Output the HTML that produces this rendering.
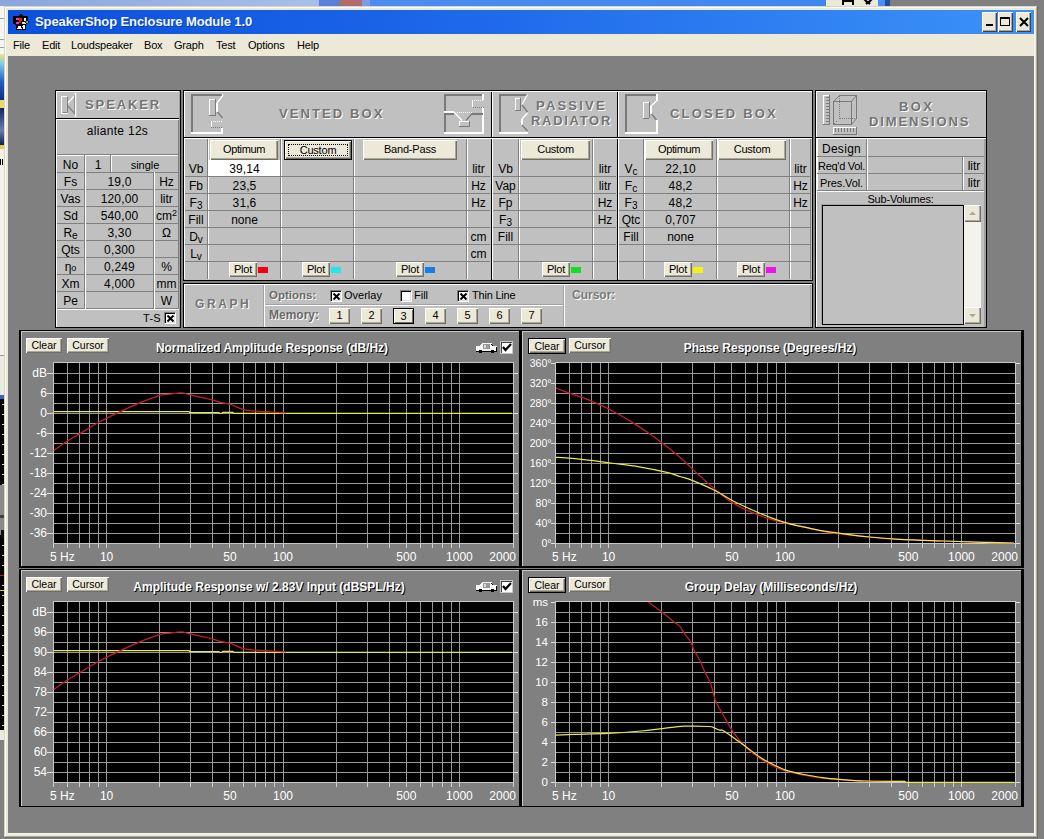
<!DOCTYPE html><html><head><meta charset="utf-8"><style>
*{margin:0;padding:0;box-sizing:border-box}
html,body{width:1044px;height:839px;overflow:hidden;background:#808080;font-family:"Liberation Sans",sans-serif}
body>div,body>svg{position:absolute}
.t{position:absolute;white-space:nowrap}
.btn{position:absolute;background:#ece9d8;text-align:center;color:#000;white-space:nowrap}
.emb{color:#747474;font-weight:bold;text-shadow:1px 1px 0 #fff;white-space:nowrap;position:absolute}
.wt{color:#fff;position:absolute;white-space:nowrap}
</style></head><body>
<div style="left:0;top:0;width:320px;height:6px;background:linear-gradient(90deg,#8aa6dc,#a9bfe8)"></div>
<div style="left:319px;top:0px;width:20px;height:6px;background:#5b7fdc;"></div>
<div style="left:342px;top:0px;width:20px;height:6px;background:#b36b6b;"></div>
<div style="left:362px;top:0px;width:8px;height:6px;background:#7d9be3;"></div>
<div style="left:370px;top:0;width:456px;height:6px;background:linear-gradient(90deg,#4b8cf0,#3d87f2)"></div>
<div style="left:826px;top:0px;width:52px;height:6px;background:#ece9d8;"></div>
<div style="left:842px;top:0px;width:12px;height:5px;background:#000;"></div>
<div style="left:844px;top:2px;width:8px;height:3px;background:#ece9d8;"></div>
<svg style="left:862px;top:0" width="12" height="6" viewBox="0 0 12 6"><path d="M2 -1 L6 3 L10 -1 M4 4 L6 2 L8 4" stroke="#000" stroke-width="2" fill="none"/></svg>
<div style="left:878px;top:0px;width:7px;height:6px;background:#4d8ff0;"></div>
<div style="left:885px;top:0px;width:5px;height:6px;background:#1e4fa8;"></div>
<div style="left:0px;top:6px;width:4px;height:48px;background:#f4f4f0;"></div>
<div style="left:0;top:54px;width:4px;height:46px;background:linear-gradient(#f4e66a,#7fd0f0 20%,#1f5fc8 60%,#0a2e8a)"></div>
<div style="left:0px;top:100px;width:4px;height:8px;background:#f0d860;"></div>
<div style="left:0;top:108px;width:4px;height:37px;background:linear-gradient(#0b2466,#6a7fb0 60%,#0c1f50)"></div>
<div style="left:0px;top:145px;width:4px;height:4px;background:#e8cc50;"></div>
<div style="left:0px;top:149px;width:4px;height:246px;background:#f2f1ea;"></div>
<div style="left:0px;top:355px;width:4px;height:1px;background:#a0a0a0;"></div>
<div style="left:0px;top:356px;width:4px;height:39px;background:#ecebe2;"></div>
<div style="left:0px;top:395px;width:4px;height:4px;background:#3a5fd0;"></div>
<div style="left:0px;top:399px;width:4px;height:86px;background:#050505;"></div>
<div style="left:0px;top:485px;width:4px;height:50px;background:#8a8a8a;"></div>
<div style="left:0px;top:535px;width:4px;height:195px;background:#050505;"></div>
<div style="left:0px;top:730px;width:4px;height:10px;background:#ecebe2;"></div>
<div style="left:2px;top:404px;width:2px;height:1px;background:#d0d0d0;"></div>
<div style="left:2px;top:414px;width:2px;height:1px;background:#d0d0d0;"></div>
<div style="left:2px;top:424px;width:2px;height:1px;background:#d0d0d0;"></div>
<div style="left:2px;top:434px;width:2px;height:1px;background:#d0d0d0;"></div>
<div style="left:2px;top:444px;width:2px;height:1px;background:#d0d0d0;"></div>
<div style="left:2px;top:454px;width:2px;height:1px;background:#d0d0d0;"></div>
<div style="left:2px;top:464px;width:2px;height:1px;background:#d0d0d0;"></div>
<div style="left:2px;top:474px;width:2px;height:1px;background:#d0d0d0;"></div>
<div style="left:2px;top:484px;width:2px;height:1px;background:#d0d0d0;"></div>
<div style="left:2px;top:545px;width:2px;height:1px;background:#d0d0d0;"></div>
<div style="left:2px;top:555px;width:2px;height:1px;background:#d0d0d0;"></div>
<div style="left:2px;top:565px;width:2px;height:1px;background:#d0d0d0;"></div>
<div style="left:2px;top:575px;width:2px;height:1px;background:#d0d0d0;"></div>
<div style="left:2px;top:585px;width:2px;height:1px;background:#d0d0d0;"></div>
<div style="left:2px;top:595px;width:2px;height:1px;background:#d0d0d0;"></div>
<div style="left:2px;top:605px;width:2px;height:1px;background:#d0d0d0;"></div>
<div style="left:2px;top:615px;width:2px;height:1px;background:#d0d0d0;"></div>
<div style="left:2px;top:625px;width:2px;height:1px;background:#d0d0d0;"></div>
<div style="left:2px;top:635px;width:2px;height:1px;background:#d0d0d0;"></div>
<div style="left:2px;top:645px;width:2px;height:1px;background:#d0d0d0;"></div>
<div style="left:2px;top:655px;width:2px;height:1px;background:#d0d0d0;"></div>
<div style="left:2px;top:665px;width:2px;height:1px;background:#d0d0d0;"></div>
<div style="left:2px;top:675px;width:2px;height:1px;background:#d0d0d0;"></div>
<div style="left:2px;top:685px;width:2px;height:1px;background:#d0d0d0;"></div>
<div style="left:2px;top:695px;width:2px;height:1px;background:#d0d0d0;"></div>
<div style="left:2px;top:705px;width:2px;height:1px;background:#d0d0d0;"></div>
<div style="left:2px;top:715px;width:2px;height:1px;background:#d0d0d0;"></div>
<div style="left:2px;top:725px;width:2px;height:1px;background:#d0d0d0;"></div>
<div style="left:0px;top:158px;width:4px;height:7px;background:#f2f1ea;"></div>
<div style="left:0px;top:159px;width:1px;height:6px;background:#000;"></div>
<div style="left:2px;top:159px;width:1px;height:6px;background:#000;"></div>
<div style="left:0px;top:18px;width:4px;height:1px;background:#a0a0a0;"></div>
<div style="left:0px;top:39px;width:4px;height:1px;background:#a0a0a0;"></div>
<div style="left:0px;top:47px;width:4px;height:1px;background:#a0a0a0;"></div>
<div style="left:0px;top:515px;width:4px;height:3px;background:#404040;"></div>
<div style="left:1px;top:530px;width:3px;height:8px;background:#101010;"></div>
<div style="left:0px;top:575px;width:4px;height:1px;background:#b02020;"></div>
<div style="left:0px;top:590px;width:4px;height:1px;background:#d0d040;"></div>
<div style="left:4px;top:6px;width:1034px;height:832px;background:#ece9d8;"></div>
<div style="left:4px;top:6px;width:1034px;height:1px;background:#d8d4c4;"></div>
<div style="left:4px;top:6px;width:1px;height:832px;background:#d8d4c4;"></div>
<div style="left:5px;top:7px;width:1032px;height:1px;background:#fdfcf6;"></div>
<div style="left:5px;top:7px;width:1px;height:830px;background:#fdfcf6;"></div>
<div style="left:1034px;top:10px;width:1px;height:824px;background:#f6f4ec;"></div>
<div style="left:8px;top:833px;width:1027px;height:1px;background:#f6f4ec;"></div>
<div style="left:1037px;top:6px;width:1px;height:832px;background:#716f64;"></div>
<div style="left:4px;top:837px;width:1034px;height:1px;background:#716f64;"></div>
<div style="left:1036px;top:7px;width:1px;height:830px;background:#aca899;"></div>
<div style="left:5px;top:836px;width:1032px;height:1px;background:#aca899;"></div>
<div style="left:8px;top:10px;width:1026px;height:24px;background:linear-gradient(90deg,#0b50dc 0%,#1e68ea 45%,#3d92f8 100%)"></div>
<svg style="left:10px;top:12px" width="22" height="20" viewBox="0 0 22 20" shape-rendering="crispEdges">
<path d="M3 4 L8 4 L10 2 L12 2 L13 4 L18 4 L18 9 L19 10 L18 11 L16 12 L16 18 L6 18 L6 13 L3 12 Z" fill="#000"/>
<rect x="6" y="6" width="3" height="2" fill="#e040e0"/><rect x="9" y="6" width="3" height="3" fill="#e82010"/>
<rect x="6" y="10" width="3" height="2" fill="#e030f0"/><rect x="9" y="9" width="2" height="2" fill="#b02030"/>
<rect x="14" y="6" width="2" height="3" fill="#fff0d0"/><rect x="12" y="10" width="3" height="2" fill="#f0f060"/>
<rect x="16" y="9" width="2" height="2" fill="#40d040"/><rect x="15" y="11" width="1" height="1" fill="#f0f0a0"/>
<rect x="8" y="14" width="3" height="3" fill="#fff"/><rect x="7" y="16" width="1" height="1" fill="#fff"/><rect x="11" y="16" width="1" height="1" fill="#fff"/>
<rect x="13" y="13" width="2" height="4" fill="#fff"/><rect x="12" y="14" width="1" height="1" fill="#fff"/>
</svg>
<div class="t" style="left:35px;top:13px;font-size:13px;line-height:18px;color:#fff;font-weight:bold;text-align:left;letter-spacing:-0.1px;color:#f4faff;text-shadow:1px 1px 0 rgba(10,30,110,0.5)">SpeakerShop Enclosure Module 1.0</div>
<div style="left:982px;top:12px;width:15px;height:20px;background:#ece9d8;box-shadow:inset 1px 1px 0 #fff,inset -1px -1px 0 #404040,inset -2px -2px 0 #aca899"></div>
<div style="left:998px;top:12px;width:15px;height:20px;background:#ece9d8;box-shadow:inset 1px 1px 0 #fff,inset -1px -1px 0 #404040,inset -2px -2px 0 #aca899"></div>
<div style="left:1016px;top:12px;width:15px;height:20px;background:#ece9d8;box-shadow:inset 1px 1px 0 #fff,inset -1px -1px 0 #404040,inset -2px -2px 0 #aca899"></div>
<div style="left:986px;top:24px;width:7px;height:2px;background:#000;"></div>
<div style="left:1000px;top:17px;width:10px;height:9px;border:1px solid #000;border-top-width:2px"></div>
<svg style="left:1019px;top:17px" width="10" height="10" viewBox="0 0 10 10"><path d="M1 1 L9 9 M9 1 L1 9" stroke="#000" stroke-width="2"/></svg>
<div style="left:8px;top:34px;width:1026px;height:22px;background:#ece9d8;"></div>
<div class="t" style="left:13px;top:38px;font-size:11px;line-height:14px;color:#000;font-weight:normal;text-align:left;letter-spacing:-0.2px">File</div>
<div class="t" style="left:42px;top:38px;font-size:11px;line-height:14px;color:#000;font-weight:normal;text-align:left;letter-spacing:-0.2px">Edit</div>
<div class="t" style="left:71px;top:38px;font-size:11px;line-height:14px;color:#000;font-weight:normal;text-align:left;letter-spacing:-0.2px">Loudspeaker</div>
<div class="t" style="left:144px;top:38px;font-size:11px;line-height:14px;color:#000;font-weight:normal;text-align:left;letter-spacing:-0.2px">Box</div>
<div class="t" style="left:174px;top:38px;font-size:11px;line-height:14px;color:#000;font-weight:normal;text-align:left;letter-spacing:-0.2px">Graph</div>
<div class="t" style="left:216px;top:38px;font-size:11px;line-height:14px;color:#000;font-weight:normal;text-align:left;letter-spacing:-0.2px">Test</div>
<div class="t" style="left:248px;top:38px;font-size:11px;line-height:14px;color:#000;font-weight:normal;text-align:left;letter-spacing:-0.2px">Options</div>
<div class="t" style="left:297px;top:38px;font-size:11px;line-height:14px;color:#000;font-weight:normal;text-align:left;letter-spacing:-0.2px">Help</div>
<div style="left:8px;top:56px;width:1026px;height:777px;background:#808080;"></div>
<div style="left:55px;top:90px;width:126px;height:238px;background:#000;"></div>
<div style="left:56px;top:91px;width:124px;height:236px;background:#c0c0c0;"></div>
<div style="left:56px;top:91px;width:124px;height:1px;background:#fff;"></div>
<div style="left:56px;top:91px;width:1px;height:236px;background:#fff;"></div>
<div style="left:56px;top:118px;width:124px;height:1px;background:#000;"></div>
<div style="left:56px;top:119px;width:124px;height:1px;background:#fff;"></div>
<div style="left:178px;top:120px;width:1px;height:35px;background:#808080;"></div>
<div style="left:57px;top:154px;width:122px;height:1px;background:#808080;"></div>
<div class="t" style="left:57px;top:123px;width:121px;height:16px;font-size:12px;line-height:16px;text-align:center;letter-spacing:0.3px;color:#000;">aliante 12s</div>
<div style="left:57px;top:155px;width:122px;height:1px;background:#fff;"></div>
<div style="left:57px;top:172px;width:122px;height:1px;background:#808080;"></div>
<div style="left:57px;top:189px;width:122px;height:1px;background:#808080;"></div>
<div style="left:57px;top:206px;width:122px;height:1px;background:#808080;"></div>
<div style="left:57px;top:223px;width:122px;height:1px;background:#808080;"></div>
<div style="left:57px;top:240px;width:122px;height:1px;background:#808080;"></div>
<div style="left:57px;top:257px;width:122px;height:1px;background:#808080;"></div>
<div style="left:57px;top:274px;width:122px;height:1px;background:#808080;"></div>
<div style="left:57px;top:291px;width:122px;height:1px;background:#808080;"></div>
<div style="left:57px;top:308px;width:122px;height:1px;background:#808080;"></div>
<div style="left:84px;top:155px;width:1px;height:154px;background:#808080;"></div>
<div style="left:85px;top:155px;width:1px;height:154px;background:#fff;"></div>
<div style="left:110px;top:155px;width:1px;height:17px;background:#808080;"></div>
<div style="left:111px;top:155px;width:1px;height:17px;background:#fff;"></div>
<div style="left:153px;top:172px;width:1px;height:137px;background:#808080;"></div>
<div style="left:154px;top:172px;width:1px;height:137px;background:#fff;"></div>
<div style="left:178px;top:155px;width:1px;height:154px;background:#808080;"></div>
<div style="left:57px;top:309px;width:122px;height:1px;background:#fff;"></div>
<div style="left:179px;top:91px;width:1px;height:236px;background:#a0a0a0;"></div>
<div class="t" style="left:57px;top:157px;width:27px;height:17px;font-size:12px;line-height:17px;text-align:center;letter-spacing:0px;color:#000;">No</div>
<div class="t" style="left:86px;top:157px;width:24px;height:17px;font-size:12px;line-height:17px;text-align:center;letter-spacing:0px;color:#000;">1</div>
<div class="t" style="left:112px;top:157px;width:66px;height:17px;font-size:11px;line-height:17px;text-align:center;letter-spacing:0px;color:#000;">single</div>
<div class="t" style="left:57px;top:174px;width:27px;height:17px;font-size:12px;line-height:17px;text-align:center;letter-spacing:0px;color:#000;">Fs</div>
<div class="t" style="left:86px;top:174px;width:67px;height:17px;font-size:12px;line-height:17px;text-align:center;letter-spacing:0.15px;color:#000;">19,0</div>
<div class="t" style="left:155px;top:174px;width:23px;height:17px;font-size:12px;line-height:17px;text-align:center;letter-spacing:0px;color:#000;">Hz</div>
<div class="t" style="left:57px;top:191px;width:27px;height:17px;font-size:12px;line-height:17px;text-align:center;letter-spacing:0px;color:#000;">Vas</div>
<div class="t" style="left:86px;top:191px;width:67px;height:17px;font-size:12px;line-height:17px;text-align:center;letter-spacing:0.15px;color:#000;">120,00</div>
<div class="t" style="left:155px;top:191px;width:23px;height:17px;font-size:12px;line-height:17px;text-align:center;letter-spacing:0px;color:#000;">litr</div>
<div class="t" style="left:57px;top:208px;width:27px;height:17px;font-size:12px;line-height:17px;text-align:center;letter-spacing:0px;color:#000;">Sd</div>
<div class="t" style="left:86px;top:208px;width:67px;height:17px;font-size:12px;line-height:17px;text-align:center;letter-spacing:0.15px;color:#000;">540,00</div>
<div class="t" style="left:155px;top:208px;width:23px;height:17px;font-size:12px;line-height:17px;text-align:center;letter-spacing:0px;color:#000;">cm<span style="font-size:9px;position:relative;top:-4px">2</span></div>
<div class="t" style="left:57px;top:225px;width:27px;height:17px;font-size:12px;line-height:17px;text-align:center;letter-spacing:0px;color:#000;">R<span style="font-size:10px;position:relative;top:2px">e</span></div>
<div class="t" style="left:86px;top:225px;width:67px;height:17px;font-size:12px;line-height:17px;text-align:center;letter-spacing:0.15px;color:#000;">3,30</div>
<div class="t" style="left:155px;top:225px;width:23px;height:17px;font-size:12px;line-height:17px;text-align:center;letter-spacing:0px;color:#000;">&#937;</div>
<div class="t" style="left:57px;top:242px;width:27px;height:17px;font-size:12px;line-height:17px;text-align:center;letter-spacing:0px;color:#000;">Qts</div>
<div class="t" style="left:86px;top:242px;width:67px;height:17px;font-size:12px;line-height:17px;text-align:center;letter-spacing:0.15px;color:#000;">0,300</div>
<div class="t" style="left:155px;top:242px;width:23px;height:17px;font-size:12px;line-height:17px;text-align:center;letter-spacing:0px;color:#000;"></div>
<div class="t" style="left:57px;top:259px;width:27px;height:17px;font-size:12px;line-height:17px;text-align:center;letter-spacing:0px;color:#000;"><span style="font-size:12px">&#951;</span><span style="font-size:9px">o</span></div>
<div class="t" style="left:86px;top:259px;width:67px;height:17px;font-size:12px;line-height:17px;text-align:center;letter-spacing:0.15px;color:#000;">0,249</div>
<div class="t" style="left:155px;top:259px;width:23px;height:17px;font-size:12px;line-height:17px;text-align:center;letter-spacing:0px;color:#000;">%</div>
<div class="t" style="left:57px;top:276px;width:27px;height:17px;font-size:12px;line-height:17px;text-align:center;letter-spacing:0px;color:#000;">Xm</div>
<div class="t" style="left:86px;top:276px;width:67px;height:17px;font-size:12px;line-height:17px;text-align:center;letter-spacing:0.15px;color:#000;">4,000</div>
<div class="t" style="left:155px;top:276px;width:23px;height:17px;font-size:12px;line-height:17px;text-align:center;letter-spacing:0px;color:#000;">mm</div>
<div class="t" style="left:57px;top:293px;width:27px;height:17px;font-size:12px;line-height:17px;text-align:center;letter-spacing:0px;color:#000;">Pe</div>
<div class="t" style="left:86px;top:293px;width:67px;height:17px;font-size:12px;line-height:17px;text-align:center;letter-spacing:0.15px;color:#000;"></div>
<div class="t" style="left:155px;top:293px;width:23px;height:17px;font-size:12px;line-height:17px;text-align:center;letter-spacing:0px;color:#000;">W</div>
<div class="t" style="left:130px;top:311px;width:31px;height:15px;font-size:11px;line-height:15px;text-align:right;letter-spacing:0.3px;color:#000;">T-S</div>
<div style="left:164px;top:312px;width:12px;height:12px;background:#fff;border:1px solid;border-color:#808080 #fff #fff #808080;box-shadow:inset 1px 1px 0 #000,inset -1px -1px 0 #dfdfdf"></div>
<svg style="left:167px;top:315px" width="7" height="7" viewBox="0 0 7 7"><path d="M0.5 0.5 L6.5 6.5 M6.5 0.5 L0.5 6.5" stroke="#000" stroke-width="2"/></svg>
<div class="emb" style="left:85px;top:97px;font-size:13px;line-height:15px;letter-spacing:1.9px">SPEAKER</div>
<svg style="left:58px;top:92px" width="22" height="26" viewBox="0 0 22 26">
<path d="M3.5 4.5 H9.5 V21.5 H3.5 Z" fill="none" stroke="#fff"/>
<path d="M4.5 20.5 H9.5 V4.5" fill="none" stroke="#808080"/>
<path d="M10 11 L17 3" stroke="#fff" stroke-width="1.2"/>
<path d="M10 14 L17 22" stroke="#808080" stroke-width="1.2"/>
<path d="M17.5 1 V25" stroke="#fff" stroke-width="1.5"/>
<path d="M16.5 3 V23" stroke="#909090" stroke-width="1"/>
</svg>
<div style="left:183px;top:90px;width:630px;height:191px;background:#000;"></div>
<div style="left:184px;top:91px;width:628px;height:189px;background:#c0c0c0;"></div>
<div style="left:491px;top:90px;width:1px;height:190px;background:#000;"></div>
<div style="left:617px;top:90px;width:1px;height:190px;background:#000;"></div>
<div style="left:184px;top:137px;width:628px;height:1px;background:#000;"></div>
<div style="left:184px;top:91px;width:628px;height:1px;background:#fff;"></div>
<div style="left:184px;top:91px;width:1px;height:46px;background:#fff;"></div>
<div style="left:184px;top:138px;width:1px;height:141px;background:#fff;"></div>
<div style="left:492px;top:91px;width:1px;height:46px;background:#fff;"></div>
<div style="left:492px;top:138px;width:1px;height:141px;background:#fff;"></div>
<div style="left:618px;top:91px;width:1px;height:46px;background:#fff;"></div>
<div style="left:618px;top:138px;width:1px;height:141px;background:#fff;"></div>
<div style="left:184px;top:138px;width:628px;height:1px;background:#fff;"></div>
<div style="left:207px;top:139px;width:1px;height:140px;background:#808080;"></div>
<div style="left:208px;top:139px;width:1px;height:140px;background:#fff;"></div>
<div style="left:280px;top:139px;width:1px;height:140px;background:#808080;"></div>
<div style="left:281px;top:139px;width:1px;height:140px;background:#fff;"></div>
<div style="left:353px;top:139px;width:1px;height:140px;background:#808080;"></div>
<div style="left:354px;top:139px;width:1px;height:140px;background:#fff;"></div>
<div style="left:466px;top:139px;width:1px;height:140px;background:#808080;"></div>
<div style="left:467px;top:139px;width:1px;height:140px;background:#fff;"></div>
<div style="left:185px;top:176px;width:305px;height:1px;background:#808080;"></div>
<div style="left:185px;top:193px;width:305px;height:1px;background:#808080;"></div>
<div style="left:185px;top:210px;width:305px;height:1px;background:#808080;"></div>
<div style="left:185px;top:227px;width:305px;height:1px;background:#808080;"></div>
<div style="left:185px;top:244px;width:305px;height:1px;background:#808080;"></div>
<div style="left:185px;top:261px;width:305px;height:1px;background:#808080;"></div>
<div style="left:518px;top:139px;width:1px;height:140px;background:#808080;"></div>
<div style="left:519px;top:139px;width:1px;height:140px;background:#fff;"></div>
<div style="left:592px;top:139px;width:1px;height:140px;background:#808080;"></div>
<div style="left:593px;top:139px;width:1px;height:140px;background:#fff;"></div>
<div style="left:493px;top:176px;width:123px;height:1px;background:#808080;"></div>
<div style="left:493px;top:193px;width:123px;height:1px;background:#808080;"></div>
<div style="left:493px;top:210px;width:123px;height:1px;background:#808080;"></div>
<div style="left:493px;top:227px;width:123px;height:1px;background:#808080;"></div>
<div style="left:493px;top:244px;width:123px;height:1px;background:#808080;"></div>
<div style="left:493px;top:261px;width:123px;height:1px;background:#808080;"></div>
<div style="left:643px;top:139px;width:1px;height:140px;background:#808080;"></div>
<div style="left:644px;top:139px;width:1px;height:140px;background:#fff;"></div>
<div style="left:716px;top:139px;width:1px;height:140px;background:#808080;"></div>
<div style="left:717px;top:139px;width:1px;height:140px;background:#fff;"></div>
<div style="left:789px;top:139px;width:1px;height:140px;background:#808080;"></div>
<div style="left:790px;top:139px;width:1px;height:140px;background:#fff;"></div>
<div style="left:619px;top:176px;width:192px;height:1px;background:#808080;"></div>
<div style="left:619px;top:193px;width:192px;height:1px;background:#808080;"></div>
<div style="left:619px;top:210px;width:192px;height:1px;background:#808080;"></div>
<div style="left:619px;top:227px;width:192px;height:1px;background:#808080;"></div>
<div style="left:619px;top:244px;width:192px;height:1px;background:#808080;"></div>
<div style="left:619px;top:261px;width:192px;height:1px;background:#808080;"></div>
<div style="left:810px;top:139px;width:1px;height:140px;background:#808080;"></div>
<div style="left:209px;top:160px;width:71px;height:16px;background:#fff;"></div>
<div class="btn" style="left:210px;top:140px;width:68px;height:20px;box-shadow:inset 1px 1px 0 #fff, inset -1px -1px 0 #716f64, inset -2px -2px 0 #aca899;font-size:11px;line-height:19px;letter-spacing:-0.4px">Optimum</div>
<div class="btn" style="left:284px;top:140px;width:68px;height:20px;border:1px solid #000;box-shadow:inset 1px 1px 0 #fff, inset -1px -1px 0 #716f64, inset -2px -2px 0 #aca899;font-size:11px;line-height:18px;letter-spacing:-0.2px">Custom<div style="position:absolute;left:3px;top:3px;right:3px;bottom:3px;border:1px dotted #000"></div></div>
<div class="btn" style="left:363px;top:140px;width:94px;height:20px;box-shadow:inset 1px 1px 0 #fff, inset -1px -1px 0 #716f64, inset -2px -2px 0 #aca899;font-size:11px;line-height:19px;letter-spacing:-0.2px">Band-Pass</div>
<div class="btn" style="left:521px;top:140px;width:69px;height:20px;box-shadow:inset 1px 1px 0 #fff, inset -1px -1px 0 #716f64, inset -2px -2px 0 #aca899;font-size:11px;line-height:19px;letter-spacing:-0.2px">Custom</div>
<div class="btn" style="left:645px;top:140px;width:68px;height:20px;box-shadow:inset 1px 1px 0 #fff, inset -1px -1px 0 #716f64, inset -2px -2px 0 #aca899;font-size:11px;line-height:19px;letter-spacing:-0.4px">Optimum</div>
<div class="btn" style="left:718px;top:140px;width:68px;height:20px;box-shadow:inset 1px 1px 0 #fff, inset -1px -1px 0 #716f64, inset -2px -2px 0 #aca899;font-size:11px;line-height:19px;letter-spacing:-0.2px">Custom</div>
<div class="t" style="left:185px;top:161px;width:22px;height:17px;font-size:12px;line-height:17px;text-align:center;letter-spacing:0px;color:#000;">Vb</div>
<div class="t" style="left:185px;top:178px;width:22px;height:17px;font-size:12px;line-height:17px;text-align:center;letter-spacing:0px;color:#000;">Fb</div>
<div class="t" style="left:185px;top:195px;width:22px;height:17px;font-size:12px;line-height:17px;text-align:center;letter-spacing:0px;color:#000;">F<span style="font-size:10px;position:relative;top:2px">3</span></div>
<div class="t" style="left:185px;top:212px;width:22px;height:17px;font-size:12px;line-height:17px;text-align:center;letter-spacing:0px;color:#000;">Fill</div>
<div class="t" style="left:185px;top:229px;width:22px;height:17px;font-size:12px;line-height:17px;text-align:center;letter-spacing:0px;color:#000;">D<span style="font-size:10px;position:relative;top:2px">v</span></div>
<div class="t" style="left:185px;top:246px;width:22px;height:17px;font-size:12px;line-height:17px;text-align:center;letter-spacing:0px;color:#000;">L<span style="font-size:10px;position:relative;top:2px">v</span></div>
<div class="t" style="left:209px;top:161px;width:71px;height:17px;font-size:12px;line-height:17px;text-align:center;letter-spacing:0.1px;color:#000;">39,14</div>
<div class="t" style="left:209px;top:178px;width:71px;height:17px;font-size:12px;line-height:17px;text-align:center;letter-spacing:0.1px;color:#000;">23,5</div>
<div class="t" style="left:209px;top:195px;width:71px;height:17px;font-size:12px;line-height:17px;text-align:center;letter-spacing:0.1px;color:#000;">31,6</div>
<div class="t" style="left:209px;top:212px;width:71px;height:17px;font-size:12px;line-height:17px;text-align:center;letter-spacing:0px;color:#000;">none</div>
<div class="t" style="left:468px;top:161px;width:21px;height:17px;font-size:12px;line-height:17px;text-align:center;letter-spacing:0px;color:#000;">litr</div>
<div class="t" style="left:468px;top:178px;width:21px;height:17px;font-size:12px;line-height:17px;text-align:center;letter-spacing:0px;color:#000;">Hz</div>
<div class="t" style="left:468px;top:195px;width:21px;height:17px;font-size:12px;line-height:17px;text-align:center;letter-spacing:0px;color:#000;">Hz</div>
<div class="t" style="left:468px;top:212px;width:21px;height:17px;font-size:12px;line-height:17px;text-align:center;letter-spacing:0px;color:#000;"></div>
<div class="t" style="left:468px;top:229px;width:21px;height:17px;font-size:12px;line-height:17px;text-align:center;letter-spacing:0px;color:#000;">cm</div>
<div class="t" style="left:468px;top:246px;width:21px;height:17px;font-size:12px;line-height:17px;text-align:center;letter-spacing:0px;color:#000;">cm</div>
<div class="t" style="left:493px;top:161px;width:25px;height:17px;font-size:12px;line-height:17px;text-align:center;letter-spacing:0px;color:#000;">Vb</div>
<div class="t" style="left:493px;top:178px;width:25px;height:17px;font-size:12px;line-height:17px;text-align:center;letter-spacing:0px;color:#000;">Vap</div>
<div class="t" style="left:493px;top:195px;width:25px;height:17px;font-size:12px;line-height:17px;text-align:center;letter-spacing:0px;color:#000;">Fp</div>
<div class="t" style="left:493px;top:212px;width:25px;height:17px;font-size:12px;line-height:17px;text-align:center;letter-spacing:0px;color:#000;">F<span style="font-size:10px;position:relative;top:2px">3</span></div>
<div class="t" style="left:493px;top:229px;width:25px;height:17px;font-size:12px;line-height:17px;text-align:center;letter-spacing:0px;color:#000;">Fill</div>
<div class="t" style="left:594px;top:161px;width:22px;height:17px;font-size:12px;line-height:17px;text-align:center;letter-spacing:0px;color:#000;">litr</div>
<div class="t" style="left:594px;top:178px;width:22px;height:17px;font-size:12px;line-height:17px;text-align:center;letter-spacing:0px;color:#000;">litr</div>
<div class="t" style="left:594px;top:195px;width:22px;height:17px;font-size:12px;line-height:17px;text-align:center;letter-spacing:0px;color:#000;">Hz</div>
<div class="t" style="left:594px;top:212px;width:22px;height:17px;font-size:12px;line-height:17px;text-align:center;letter-spacing:0px;color:#000;">Hz</div>
<div class="t" style="left:619px;top:161px;width:24px;height:17px;font-size:12px;line-height:17px;text-align:center;letter-spacing:0px;color:#000;">V<span style="font-size:10px;position:relative;top:2px">c</span></div>
<div class="t" style="left:619px;top:178px;width:24px;height:17px;font-size:12px;line-height:17px;text-align:center;letter-spacing:0px;color:#000;">F<span style="font-size:10px;position:relative;top:2px">c</span></div>
<div class="t" style="left:619px;top:195px;width:24px;height:17px;font-size:12px;line-height:17px;text-align:center;letter-spacing:0px;color:#000;">F<span style="font-size:10px;position:relative;top:2px">3</span></div>
<div class="t" style="left:619px;top:212px;width:24px;height:17px;font-size:12px;line-height:17px;text-align:center;letter-spacing:0px;color:#000;">Qtc</div>
<div class="t" style="left:619px;top:229px;width:24px;height:17px;font-size:12px;line-height:17px;text-align:center;letter-spacing:0px;color:#000;">Fill</div>
<div class="t" style="left:645px;top:161px;width:71px;height:17px;font-size:12px;line-height:17px;text-align:center;letter-spacing:0.1px;color:#000;">22,10</div>
<div class="t" style="left:645px;top:178px;width:71px;height:17px;font-size:12px;line-height:17px;text-align:center;letter-spacing:0.1px;color:#000;">48,2</div>
<div class="t" style="left:645px;top:195px;width:71px;height:17px;font-size:12px;line-height:17px;text-align:center;letter-spacing:0.1px;color:#000;">48,2</div>
<div class="t" style="left:645px;top:212px;width:71px;height:17px;font-size:12px;line-height:17px;text-align:center;letter-spacing:0.1px;color:#000;">0,707</div>
<div class="t" style="left:645px;top:229px;width:71px;height:17px;font-size:12px;line-height:17px;text-align:center;letter-spacing:0px;color:#000;">none</div>
<div class="t" style="left:791px;top:161px;width:19px;height:17px;font-size:12px;line-height:17px;text-align:center;letter-spacing:0px;color:#000;">litr</div>
<div class="t" style="left:791px;top:178px;width:19px;height:17px;font-size:12px;line-height:17px;text-align:center;letter-spacing:0px;color:#000;">Hz</div>
<div class="t" style="left:791px;top:195px;width:19px;height:17px;font-size:12px;line-height:17px;text-align:center;letter-spacing:0px;color:#000;">Hz</div>
<div class="btn" style="left:229px;top:262px;width:28px;height:15px;box-shadow:inset 1px 1px 0 #fff, inset -1px -1px 0 #716f64, inset -2px -2px 0 #aca899;font-size:11px;line-height:14px;letter-spacing:-0.2px">Plot</div>
<div style="left:258px;top:267px;width:10px;height:6px;background:#f00010;"></div>
<div class="btn" style="left:302px;top:262px;width:28px;height:15px;box-shadow:inset 1px 1px 0 #fff, inset -1px -1px 0 #716f64, inset -2px -2px 0 #aca899;font-size:11px;line-height:14px;letter-spacing:-0.2px">Plot</div>
<div style="left:331px;top:267px;width:10px;height:6px;background:#20e8f0;"></div>
<div class="btn" style="left:396px;top:262px;width:28px;height:15px;box-shadow:inset 1px 1px 0 #fff, inset -1px -1px 0 #716f64, inset -2px -2px 0 #aca899;font-size:11px;line-height:14px;letter-spacing:-0.2px">Plot</div>
<div style="left:425px;top:267px;width:10px;height:6px;background:#1080f0;"></div>
<div class="btn" style="left:542px;top:262px;width:28px;height:15px;box-shadow:inset 1px 1px 0 #fff, inset -1px -1px 0 #716f64, inset -2px -2px 0 #aca899;font-size:11px;line-height:14px;letter-spacing:-0.2px">Plot</div>
<div style="left:571px;top:267px;width:10px;height:6px;background:#10e020;"></div>
<div class="btn" style="left:664px;top:262px;width:28px;height:15px;box-shadow:inset 1px 1px 0 #fff, inset -1px -1px 0 #716f64, inset -2px -2px 0 #aca899;font-size:11px;line-height:14px;letter-spacing:-0.2px">Plot</div>
<div style="left:693px;top:267px;width:10px;height:6px;background:#f8f010;"></div>
<div class="btn" style="left:737px;top:262px;width:28px;height:15px;box-shadow:inset 1px 1px 0 #fff, inset -1px -1px 0 #716f64, inset -2px -2px 0 #aca899;font-size:11px;line-height:14px;letter-spacing:-0.2px">Plot</div>
<div style="left:766px;top:267px;width:10px;height:6px;background:#f010f0;"></div>
<div class="emb" style="left:279px;top:106px;font-size:13px;line-height:15px;letter-spacing:2.1px">VENTED BOX</div>
<div class="emb" style="left:536px;top:98px;font-size:13px;line-height:15px;letter-spacing:2.2px">PASSIVE</div>
<div class="emb" style="left:531px;top:113px;font-size:13px;line-height:15px;letter-spacing:1.7px">RADIATOR</div>
<div class="emb" style="left:670px;top:106px;font-size:13px;line-height:15px;letter-spacing:2.2px">CLOSED BOX</div>
<svg style="left:186px;top:90px" width="45" height="48" viewBox="186 90 45 48" shape-rendering="crispEdges"><rect x="191" y="94" width="31" height="2" fill="#7a7a7a"/><rect x="191" y="94" width="2" height="39" fill="#7a7a7a"/><rect x="191" y="132" width="32" height="2" fill="#ffffff"/><path d="M222.5 94 L222.5 96 L217 103" fill="none" stroke="#ffffff" stroke-width="1.3" shape-rendering="auto"/><rect x="216" y="103" width="1.5" height="9" fill="#ffffff"/><path d="M217.5 112 L222.5 118" fill="none" stroke="#7a7a7a" stroke-width="1.3" shape-rendering="auto"/><rect x="209" y="99" width="1" height="16" fill="#ffffff"/><rect x="209" y="99" width="7" height="1" fill="#ffffff"/><rect x="215" y="99" width="1" height="16" fill="#7a7a7a"/><rect x="209" y="115" width="7" height="1" fill="#7a7a7a"/><rect x="211" y="121" width="1" height="1" fill="#ffffff"/><rect x="213" y="121" width="1" height="1" fill="#ffffff"/><rect x="215" y="121" width="1" height="1" fill="#ffffff"/><rect x="217" y="121" width="1" height="1" fill="#ffffff"/><rect x="219" y="121" width="1" height="1" fill="#ffffff"/><rect x="221" y="121" width="1" height="1" fill="#ffffff"/><rect x="211" y="121" width="1" height="7" fill="#ffffff"/><rect x="211" y="127" width="1" height="1" fill="#7a7a7a"/><rect x="213" y="127" width="1" height="1" fill="#7a7a7a"/><rect x="215" y="127" width="1" height="1" fill="#7a7a7a"/><rect x="217" y="127" width="1" height="1" fill="#7a7a7a"/><rect x="219" y="127" width="1" height="1" fill="#7a7a7a"/><rect x="221" y="127" width="1" height="1" fill="#7a7a7a"/><rect x="221" y="128" width="2" height="5" fill="#ffffff"/></svg>
<svg style="left:440px;top:90px" width="51" height="48" viewBox="440 90 51 48" shape-rendering="crispEdges"><rect x="444" y="94" width="40" height="2" fill="#7a7a7a"/><rect x="444" y="94" width="2" height="40" fill="#7a7a7a"/><rect x="444" y="132" width="40" height="2" fill="#ffffff"/><rect x="482" y="94" width="2" height="6" fill="#ffffff"/><rect x="482" y="107" width="2" height="27" fill="#ffffff"/><rect x="444" y="111" width="10" height="1.5" fill="#ffffff"/><rect x="444" y="113" width="10" height="1.5" fill="#7a7a7a"/><path d="M454 112 L462 120.5" fill="none" stroke="#ffffff" stroke-width="1.3" shape-rendering="auto"/><path d="M466 120.5 L472.5 113" fill="none" stroke="#7a7a7a" stroke-width="1.3" shape-rendering="auto"/><rect x="457" y="112" width="1" height="1" fill="#ffffff"/><rect x="459" y="112" width="1" height="1" fill="#ffffff"/><rect x="461" y="112" width="1" height="1" fill="#ffffff"/><rect x="463" y="112" width="1" height="1" fill="#ffffff"/><rect x="465" y="112" width="1" height="1" fill="#ffffff"/><rect x="467" y="112" width="1" height="1" fill="#ffffff"/><rect x="469" y="112" width="1" height="1" fill="#ffffff"/><rect x="471" y="112" width="1" height="1" fill="#ffffff"/><rect x="472" y="113" width="11" height="1.5" fill="#7a7a7a"/><rect x="459" y="121" width="11" height="1" fill="#ffffff"/><rect x="459" y="121" width="1" height="6" fill="#ffffff"/><rect x="469" y="121" width="1" height="6" fill="#7a7a7a"/><rect x="459" y="126" width="11" height="1" fill="#7a7a7a"/><rect x="472" y="100" width="1" height="1" fill="#ffffff"/><rect x="474" y="100" width="1" height="1" fill="#ffffff"/><rect x="476" y="100" width="1" height="1" fill="#ffffff"/><rect x="478" y="100" width="1" height="1" fill="#ffffff"/><rect x="480" y="100" width="1" height="1" fill="#ffffff"/><rect x="482" y="100" width="1" height="1" fill="#ffffff"/><rect x="472" y="100" width="1" height="7" fill="#ffffff"/><rect x="473" y="107" width="1" height="1" fill="#7a7a7a"/><rect x="475" y="107" width="1" height="1" fill="#7a7a7a"/><rect x="477" y="107" width="1" height="1" fill="#7a7a7a"/><rect x="479" y="107" width="1" height="1" fill="#7a7a7a"/><rect x="481" y="107" width="1" height="1" fill="#7a7a7a"/><rect x="483" y="107" width="1" height="1" fill="#7a7a7a"/></svg>
<svg style="left:492px;top:90px" width="48" height="48" viewBox="492 90 48 48" shape-rendering="crispEdges"><rect x="499" y="94" width="28" height="2" fill="#7a7a7a"/><rect x="499" y="94" width="2" height="39" fill="#7a7a7a"/><rect x="499" y="132" width="29" height="2" fill="#ffffff"/><path d="M527.5 94.5 L522 104.5" fill="none" stroke="#ffffff" stroke-width="1.3" shape-rendering="auto"/><path d="M522 105 L527.5 112" fill="none" stroke="#7a7a7a" stroke-width="1.3" shape-rendering="auto"/><path d="M527.5 113 L522 119" fill="none" stroke="#ffffff" stroke-width="1.3" shape-rendering="auto"/><rect x="521" y="119" width="1.5" height="6" fill="#ffffff"/><path d="M522 125 L527.5 131" fill="none" stroke="#7a7a7a" stroke-width="1.3" shape-rendering="auto"/><rect x="515" y="98" width="1" height="12" fill="#ffffff"/><rect x="515" y="98" width="6" height="1" fill="#ffffff"/><rect x="520" y="98" width="1" height="12" fill="#7a7a7a"/><rect x="515" y="110" width="6" height="1" fill="#7a7a7a"/></svg>
<svg style="left:618px;top:90px" width="48" height="48" viewBox="618 90 48 48" shape-rendering="crispEdges"><rect x="625" y="94" width="31" height="2" fill="#7a7a7a"/><rect x="625" y="94" width="2" height="39" fill="#7a7a7a"/><rect x="625" y="132" width="32" height="2" fill="#ffffff"/><rect x="656" y="94" width="1.5" height="7" fill="#ffffff"/><path d="M656.5 101 L651 106" fill="none" stroke="#ffffff" stroke-width="1.3" shape-rendering="auto"/><rect x="650" y="106" width="1.5" height="8" fill="#ffffff"/><path d="M651.5 114 L656.5 120" fill="none" stroke="#7a7a7a" stroke-width="1.3" shape-rendering="auto"/><rect x="656" y="120" width="1.5" height="14" fill="#ffffff"/><rect x="643" y="102" width="1" height="16" fill="#ffffff"/><rect x="643" y="102" width="6" height="1" fill="#ffffff"/><rect x="648.5" y="102" width="1" height="16" fill="#7a7a7a"/><rect x="643" y="118" width="6" height="1" fill="#7a7a7a"/></svg>
<div style="left:815px;top:90px;width:172px;height:238px;background:#000;"></div>
<div style="left:816px;top:91px;width:170px;height:236px;background:#c0c0c0;"></div>
<div style="left:816px;top:91px;width:170px;height:1px;background:#fff;"></div>
<div style="left:816px;top:91px;width:1px;height:236px;background:#fff;"></div>
<div style="left:816px;top:137px;width:170px;height:1px;background:#000;"></div>
<div style="left:816px;top:138px;width:170px;height:1px;background:#fff;"></div>
<svg style="left:816px;top:90px" width="50" height="48" viewBox="816 90 50 48" shape-rendering="crispEdges"><rect x="823" y="95" width="7" height="30" fill="#c0c0c0"/><rect x="823" y="95" width="1" height="30" fill="#ffffff"/><rect x="823" y="95" width="7" height="1" fill="#ffffff"/><rect x="829" y="95" width="1" height="30" fill="#7a7a7a"/><rect x="823" y="124" width="7" height="1" fill="#7a7a7a"/><rect x="826" y="97" width="4" height="1" fill="#7a7a7a"/><rect x="826" y="100" width="4" height="1" fill="#7a7a7a"/><rect x="826" y="103" width="4" height="1" fill="#7a7a7a"/><rect x="826" y="106" width="4" height="1" fill="#7a7a7a"/><rect x="826" y="109" width="4" height="1" fill="#7a7a7a"/><rect x="826" y="112" width="4" height="1" fill="#7a7a7a"/><rect x="826" y="115" width="4" height="1" fill="#7a7a7a"/><rect x="826" y="118" width="4" height="1" fill="#7a7a7a"/><rect x="826" y="121" width="4" height="1" fill="#7a7a7a"/><rect x="833" y="101" width="1" height="24" fill="#7a7a7a"/><rect x="833" y="101" width="19" height="1" fill="#7a7a7a"/><rect x="851" y="101" width="1" height="24" fill="#7a7a7a"/><rect x="833" y="124" width="19" height="1" fill="#7a7a7a"/><rect x="839" y="95" width="18" height="1" fill="#7a7a7a"/><rect x="856" y="95" width="1" height="24" fill="#7a7a7a"/><path d="M833.5 101.5 L839.5 95.5" fill="none" stroke="#7a7a7a" stroke-width="1" shape-rendering="auto"/><path d="M851.5 101.5 L856.5 95.5" fill="none" stroke="#7a7a7a" stroke-width="1" shape-rendering="auto"/><path d="M851.5 124.5 L856.5 118.5" fill="none" stroke="#7a7a7a" stroke-width="1" shape-rendering="auto"/><rect x="839" y="96" width="1" height="1" fill="#7a7a7a"/><rect x="839" y="98" width="1" height="1" fill="#7a7a7a"/><rect x="839" y="100" width="1" height="1" fill="#7a7a7a"/><rect x="839" y="102" width="1" height="1" fill="#7a7a7a"/><rect x="839" y="104" width="1" height="1" fill="#7a7a7a"/><rect x="839" y="106" width="1" height="1" fill="#7a7a7a"/><rect x="839" y="108" width="1" height="1" fill="#7a7a7a"/><rect x="839" y="110" width="1" height="1" fill="#7a7a7a"/><rect x="839" y="112" width="1" height="1" fill="#7a7a7a"/><rect x="839" y="114" width="1" height="1" fill="#7a7a7a"/><rect x="839" y="116" width="1" height="1" fill="#7a7a7a"/><rect x="839" y="118" width="1" height="1" fill="#7a7a7a"/><rect x="840" y="118" width="1" height="1" fill="#7a7a7a"/><rect x="842" y="118" width="1" height="1" fill="#7a7a7a"/><rect x="844" y="118" width="1" height="1" fill="#7a7a7a"/><rect x="846" y="118" width="1" height="1" fill="#7a7a7a"/><rect x="848" y="118" width="1" height="1" fill="#7a7a7a"/><rect x="850" y="118" width="1" height="1" fill="#7a7a7a"/><rect x="852" y="118" width="1" height="1" fill="#7a7a7a"/><rect x="854" y="118" width="1" height="1" fill="#7a7a7a"/><rect x="836" y="121" width="1" height="1" fill="#7a7a7a"/><rect x="834" y="123" width="1" height="1" fill="#7a7a7a"/><rect x="833" y="127" width="24" height="8" fill="#c0c0c0"/><rect x="833" y="127" width="24" height="1" fill="#ffffff"/><rect x="833" y="127" width="1" height="8" fill="#ffffff"/><rect x="856" y="127" width="1" height="8" fill="#7a7a7a"/><rect x="833" y="134" width="24" height="1" fill="#7a7a7a"/><rect x="835" y="128" width="1" height="4" fill="#7a7a7a"/><rect x="838" y="128" width="1" height="4" fill="#7a7a7a"/><rect x="841" y="128" width="1" height="4" fill="#7a7a7a"/><rect x="844" y="128" width="1" height="4" fill="#7a7a7a"/><rect x="847" y="128" width="1" height="4" fill="#7a7a7a"/><rect x="850" y="128" width="1" height="4" fill="#7a7a7a"/><rect x="853" y="128" width="1" height="4" fill="#7a7a7a"/><rect x="856" y="128" width="1" height="4" fill="#7a7a7a"/></svg>
<div class="emb" style="left:899px;top:99px;font-size:13px;line-height:15px;letter-spacing:2.4px">BOX</div>
<div class="emb" style="left:869px;top:114px;font-size:13px;line-height:15px;letter-spacing:1.9px">DIMENSIONS</div>
<div style="left:817px;top:139px;width:1px;height:52px;background:#fff;"></div>
<div style="left:817px;top:156px;width:168px;height:1px;background:#808080;"></div>
<div style="left:817px;top:173px;width:168px;height:1px;background:#808080;"></div>
<div style="left:817px;top:190px;width:168px;height:1px;background:#808080;"></div>
<div style="left:817px;top:191px;width:168px;height:1px;background:#fff;"></div>
<div style="left:866px;top:139px;width:1px;height:51px;background:#808080;"></div>
<div style="left:867px;top:139px;width:1px;height:51px;background:#fff;"></div>
<div style="left:962px;top:157px;width:1px;height:33px;background:#808080;"></div>
<div style="left:963px;top:157px;width:1px;height:33px;background:#fff;"></div>
<div style="left:984px;top:139px;width:1px;height:188px;background:#a0a0a0;"></div>
<div style="left:985px;top:139px;width:1px;height:188px;background:#a0a0a0;"></div>
<div class="t" style="left:817px;top:141px;width:49px;height:17px;font-size:12px;line-height:17px;text-align:center;letter-spacing:0.3px;color:#000;">Design</div>
<div class="t" style="left:817px;top:158px;width:49px;height:17px;font-size:11px;line-height:17px;text-align:center;letter-spacing:-0.3px;color:#000;">Req'd Vol.</div>
<div class="t" style="left:817px;top:175px;width:49px;height:17px;font-size:11px;line-height:17px;text-align:center;letter-spacing:-0.1px;color:#000;">Pres.Vol.</div>
<div class="t" style="left:964px;top:158px;width:20px;height:17px;font-size:12px;line-height:17px;text-align:center;letter-spacing:0px;color:#000;">litr</div>
<div class="t" style="left:964px;top:175px;width:20px;height:17px;font-size:12px;line-height:17px;text-align:center;letter-spacing:0px;color:#000;">litr</div>
<div class="t" style="left:817px;top:192px;width:167px;height:15px;font-size:11px;line-height:15px;text-align:center;letter-spacing:-0.2px;color:#000;">Sub-Volumes:</div>
<div style="left:822px;top:205px;width:142px;height:120px;background:#c0c0c0;border:1px solid #000;box-shadow:-1px -1px 0 #a0a0a0"></div>
<div style="left:964px;top:205px;width:17px;height:119px;background:#f3f2ec"></div>
<div style="left:964px;top:205px;width:17px;height:17px;background:#ece9d8;box-shadow:inset 1px 1px 0 #fff,inset -1px -1px 0 #716f64,inset -2px -2px 0 #aca899"></div>
<div style="left:964px;top:307px;width:17px;height:17px;background:#ece9d8;box-shadow:inset 1px 1px 0 #fff,inset -1px -1px 0 #716f64,inset -2px -2px 0 #aca899"></div>
<svg style="left:964px;top:205px" width="17" height="17"><path d="M5 10 L8.5 6.5 L12 10 Z" fill="#a8a89c"/></svg>
<svg style="left:964px;top:307px" width="17" height="17"><path d="M5 7 L8.5 10.5 L12 7 Z" fill="#a8a89c"/></svg>
<div style="left:183px;top:283px;width:630px;height:45px;background:#000;"></div>
<div style="left:184px;top:284px;width:628px;height:43px;background:#c0c0c0;"></div>
<div style="left:184px;top:284px;width:628px;height:1px;background:#fff;"></div>
<div style="left:184px;top:284px;width:1px;height:43px;background:#fff;"></div>
<div style="left:810px;top:285px;width:1px;height:42px;background:#a0a0a0;"></div>
<div style="left:263px;top:285px;width:1px;height:42px;background:#a0a0a0;"></div>
<div style="left:264px;top:285px;width:1px;height:42px;background:#fff;"></div>
<div style="left:265px;top:304px;width:298px;height:1px;background:#a0a0a0;"></div>
<div style="left:265px;top:305px;width:298px;height:1px;background:#fff;"></div>
<div style="left:563px;top:285px;width:1px;height:42px;background:#a0a0a0;"></div>
<div style="left:564px;top:285px;width:1px;height:42px;background:#fff;"></div>
<div class="emb" style="left:195px;top:297px;font-size:12px;line-height:14px;letter-spacing:2.6px">GRAPH</div>
<div class="emb" style="left:269px;top:288px;font-size:11.5px;line-height:14px;color:#6a6a6a">Options:</div>
<div class="emb" style="left:269px;top:308px;font-size:12px;line-height:14px;color:#6a6a6a">Memory:</div>
<div class="emb" style="left:572px;top:288px;font-size:12px;line-height:14px;color:#7a7a7a">Cursor:</div>
<div style="left:330px;top:290px;width:12px;height:12px;background:#fff;border:1px solid;border-color:#808080 #fff #fff #808080;box-shadow:inset 1px 1px 0 #000,inset -1px -1px 0 #dfdfdf"></div>
<svg style="left:333px;top:293px" width="7" height="7" viewBox="0 0 7 7"><path d="M0.5 0.5 L6.5 6.5 M6.5 0.5 L0.5 6.5" stroke="#000" stroke-width="2"/></svg>
<div class="t" style="left:344px;top:288px;font-size:11px;line-height:14px;color:#000;font-weight:normal;text-align:left;">Overlay</div>
<div style="left:400px;top:290px;width:12px;height:12px;background:#fff;border:1px solid;border-color:#808080 #fff #fff #808080;box-shadow:inset 1px 1px 0 #000,inset -1px -1px 0 #dfdfdf"></div>
<div class="t" style="left:414px;top:288px;font-size:11px;line-height:14px;color:#000;font-weight:normal;text-align:left;">Fill</div>
<div style="left:457px;top:290px;width:12px;height:12px;background:#fff;border:1px solid;border-color:#808080 #fff #fff #808080;box-shadow:inset 1px 1px 0 #000,inset -1px -1px 0 #dfdfdf"></div>
<svg style="left:460px;top:293px" width="7" height="7" viewBox="0 0 7 7"><path d="M0.5 0.5 L6.5 6.5 M6.5 0.5 L0.5 6.5" stroke="#000" stroke-width="2"/></svg>
<div class="t" style="left:472px;top:288px;font-size:11px;line-height:14px;color:#000;font-weight:normal;text-align:left;letter-spacing:-0.2px">Thin Line</div>
<div class="btn" style="left:329px;top:308px;width:21px;height:16px;box-shadow:inset 1px 1px 0 #fff,inset -1px -1px 0 #716f64,inset -2px -2px 0 #aca899;font-size:11px;line-height:15px">1</div>
<div class="btn" style="left:361px;top:308px;width:21px;height:16px;box-shadow:inset 1px 1px 0 #fff,inset -1px -1px 0 #716f64,inset -2px -2px 0 #aca899;font-size:11px;line-height:15px">2</div>
<div class="btn" style="left:393px;top:308px;width:21px;height:16px;border:1px solid #000;box-shadow:inset 1px 1px 0 #fff,inset -1px -1px 0 #716f64;font-size:11px;line-height:14px">3</div>
<div class="btn" style="left:425px;top:308px;width:21px;height:16px;box-shadow:inset 1px 1px 0 #fff,inset -1px -1px 0 #716f64,inset -2px -2px 0 #aca899;font-size:11px;line-height:15px">4</div>
<div class="btn" style="left:457px;top:308px;width:21px;height:16px;box-shadow:inset 1px 1px 0 #fff,inset -1px -1px 0 #716f64,inset -2px -2px 0 #aca899;font-size:11px;line-height:15px">5</div>
<div class="btn" style="left:489px;top:308px;width:21px;height:16px;box-shadow:inset 1px 1px 0 #fff,inset -1px -1px 0 #716f64,inset -2px -2px 0 #aca899;font-size:11px;line-height:15px">6</div>
<div class="btn" style="left:521px;top:308px;width:21px;height:16px;box-shadow:inset 1px 1px 0 #fff,inset -1px -1px 0 #716f64,inset -2px -2px 0 #aca899;font-size:11px;line-height:15px">7</div>
<div style="left:19px;top:330px;width:1005px;height:477px;background:#000;"></div>
<div style="left:19px;top:568px;width:1005px;height:1px;background:#808080;"></div>
<div style="left:21px;top:331px;width:498px;height:235px;background:#808080;"></div>
<div style="left:21px;top:331px;width:498px;height:1px;background:#c8c8c8;"></div>
<div style="left:21px;top:331px;width:1px;height:235px;background:#c8c8c8;"></div>
<div style="left:522px;top:331px;width:499px;height:235px;background:#808080;"></div>
<div style="left:522px;top:331px;width:499px;height:1px;background:#c8c8c8;"></div>
<div style="left:522px;top:331px;width:1px;height:235px;background:#c8c8c8;"></div>
<div style="left:21px;top:570px;width:498px;height:236px;background:#808080;"></div>
<div style="left:21px;top:570px;width:498px;height:1px;background:#c8c8c8;"></div>
<div style="left:21px;top:570px;width:1px;height:236px;background:#c8c8c8;"></div>
<div style="left:522px;top:570px;width:499px;height:236px;background:#808080;"></div>
<div style="left:522px;top:570px;width:499px;height:1px;background:#c8c8c8;"></div>
<div style="left:522px;top:570px;width:1px;height:236px;background:#c8c8c8;"></div>
<div class="btn" style="left:26px;top:338px;width:36px;height:15px;box-shadow:inset 1px 1px 0 #fff, inset -1px -1px 0 #716f64, inset -2px -2px 0 #aca899;font-size:10.5px;line-height:14px;letter-spacing:0px">Clear</div>
<div class="btn" style="left:67px;top:338px;width:42px;height:15px;box-shadow:inset 1px 1px 0 #fff, inset -1px -1px 0 #716f64, inset -2px -2px 0 #aca899;font-size:10.5px;line-height:14px;letter-spacing:0px">Cursor</div>
<div class="wt" style="left:72px;top:341px;width:400px;text-align:center;font-size:12px;line-height:14px;font-weight:bold;letter-spacing:0px;text-shadow:1px 1px 0 #000">Normalized Amplitude Response (dB/Hz)</div>
<svg style="left:476px;top:342px" width="24" height="12" viewBox="0 0 24 12" shape-rendering="crispEdges">
<rect x="0" y="4" width="21" height="5" fill="#f4f4f4"/>
<rect x="6" y="1" width="10" height="3" fill="#f4f4f4"/><rect x="5" y="2" width="1" height="2" fill="#f4f4f4"/><rect x="4" y="3" width="1" height="1" fill="#f4f4f4"/>
<rect x="7" y="2" width="7" height="5" fill="#989898"/><rect x="8" y="3" width="2" height="3" fill="#d8d8d8"/>
<rect x="15" y="2" width="1" height="1" fill="#000"/><rect x="16" y="3" width="1" height="1" fill="#000"/>
<rect x="0" y="9" width="21" height="1" fill="#000"/><rect x="20" y="5" width="1" height="5" fill="#000"/>
<rect x="3" y="8" width="3" height="3" fill="#000"/><rect x="15" y="8" width="3" height="3" fill="#000"/>
</svg>
<div style="left:500px;top:341px;width:13px;height:13px;background:#fff;border:1px solid #c8c8c8;box-shadow:inset 1px 1px 0 #404040"></div>
<svg style="left:502px;top:343px" width="10" height="9" viewBox="0 0 10 9"><path d="M1 4 L3.5 7 L9 1" fill="none" stroke="#000" stroke-width="2.2"/></svg>
<div class="wt" style="left:-13px;top:366px;width:60px;text-align:right;font-size:12px;line-height:14px">dB</div>
<div class="wt" style="left:-13px;top:386px;width:60px;text-align:right;font-size:12px;line-height:14px">6</div>
<div class="wt" style="left:-13px;top:406px;width:60px;text-align:right;font-size:12px;line-height:14px">0</div>
<div class="wt" style="left:-13px;top:426px;width:60px;text-align:right;font-size:12px;line-height:14px">-6</div>
<div class="wt" style="left:-13px;top:446px;width:60px;text-align:right;font-size:12px;line-height:14px">-12</div>
<div class="wt" style="left:-13px;top:466px;width:60px;text-align:right;font-size:12px;line-height:14px">-18</div>
<div class="wt" style="left:-13px;top:486px;width:60px;text-align:right;font-size:12px;line-height:14px">-24</div>
<div class="wt" style="left:-13px;top:506px;width:60px;text-align:right;font-size:12px;line-height:14px">-30</div>
<div class="wt" style="left:-13px;top:526px;width:60px;text-align:right;font-size:12px;line-height:14px">-36</div>
<div class="wt" style="left:50px;top:550px;font-size:12px;line-height:14px">5 Hz</div>
<div class="wt" style="left:76.6px;top:550px;width:60px;text-align:center;font-size:12px;line-height:14px">10</div>
<div class="wt" style="left:199.9px;top:550px;width:60px;text-align:center;font-size:12px;line-height:14px">50</div>
<div class="wt" style="left:253.0px;top:550px;width:60px;text-align:center;font-size:12px;line-height:14px">100</div>
<div class="wt" style="left:376.3px;top:550px;width:60px;text-align:center;font-size:12px;line-height:14px">500</div>
<div class="wt" style="left:429.4px;top:550px;width:60px;text-align:center;font-size:12px;line-height:14px">1000</div>
<div class="wt" style="left:456px;top:550px;width:60px;text-align:right;font-size:12px;line-height:14px">2000</div>
<div class="btn" style="left:528px;top:338px;width:38px;height:16px;border:1px solid #000;box-shadow:inset 1px 1px 0 #fff, inset -1px -1px 0 #716f64, inset -2px -2px 0 #aca899;font-size:10.5px;line-height:14px;letter-spacing:0px">Clear</div>
<div class="btn" style="left:569px;top:338px;width:42px;height:15px;box-shadow:inset 1px 1px 0 #fff, inset -1px -1px 0 #716f64, inset -2px -2px 0 #aca899;font-size:10.5px;line-height:14px;letter-spacing:0px">Cursor</div>
<div class="wt" style="left:570px;top:341px;width:400px;text-align:center;font-size:12px;line-height:14px;font-weight:bold;letter-spacing:0px;text-shadow:1px 1px 0 #000">Phase Response (Degrees/Hz)</div>
<div class="wt" style="left:491.5px;top:356px;width:60px;text-align:right;font-size:10.5px;line-height:14px">360°</div>
<div class="wt" style="left:491.5px;top:376px;width:60px;text-align:right;font-size:10.5px;line-height:14px">320°</div>
<div class="wt" style="left:491.5px;top:396px;width:60px;text-align:right;font-size:10.5px;line-height:14px">280°</div>
<div class="wt" style="left:491.5px;top:416px;width:60px;text-align:right;font-size:10.5px;line-height:14px">240°</div>
<div class="wt" style="left:491.5px;top:436px;width:60px;text-align:right;font-size:10.5px;line-height:14px">200°</div>
<div class="wt" style="left:491.5px;top:456px;width:60px;text-align:right;font-size:10.5px;line-height:14px">160°</div>
<div class="wt" style="left:491.5px;top:476px;width:60px;text-align:right;font-size:10.5px;line-height:14px">120°</div>
<div class="wt" style="left:491.5px;top:496px;width:60px;text-align:right;font-size:10.5px;line-height:14px">80°</div>
<div class="wt" style="left:491.5px;top:516px;width:60px;text-align:right;font-size:10.5px;line-height:14px">40°</div>
<div class="wt" style="left:491.5px;top:536px;width:60px;text-align:right;font-size:10.5px;line-height:14px">0°</div>
<div class="wt" style="left:552px;top:550px;font-size:12px;line-height:14px">5 Hz</div>
<div class="wt" style="left:578.6px;top:550px;width:60px;text-align:center;font-size:12px;line-height:14px">10</div>
<div class="wt" style="left:701.9px;top:550px;width:60px;text-align:center;font-size:12px;line-height:14px">50</div>
<div class="wt" style="left:755.0px;top:550px;width:60px;text-align:center;font-size:12px;line-height:14px">100</div>
<div class="wt" style="left:878.3px;top:550px;width:60px;text-align:center;font-size:12px;line-height:14px">500</div>
<div class="wt" style="left:931.4px;top:550px;width:60px;text-align:center;font-size:12px;line-height:14px">1000</div>
<div class="wt" style="left:958px;top:550px;width:60px;text-align:right;font-size:12px;line-height:14px">2000</div>
<div class="btn" style="left:26px;top:577px;width:36px;height:15px;box-shadow:inset 1px 1px 0 #fff, inset -1px -1px 0 #716f64, inset -2px -2px 0 #aca899;font-size:10.5px;line-height:14px;letter-spacing:0px">Clear</div>
<div class="btn" style="left:67px;top:577px;width:42px;height:15px;box-shadow:inset 1px 1px 0 #fff, inset -1px -1px 0 #716f64, inset -2px -2px 0 #aca899;font-size:10.5px;line-height:14px;letter-spacing:0px">Cursor</div>
<div class="wt" style="left:69px;top:580px;width:400px;text-align:center;font-size:12px;line-height:14px;font-weight:bold;letter-spacing:0px;text-shadow:1px 1px 0 #000">Amplitude Response w/ 2.83V Input (dBSPL/Hz)</div>
<svg style="left:476px;top:581px" width="24" height="12" viewBox="0 0 24 12" shape-rendering="crispEdges">
<rect x="0" y="4" width="21" height="5" fill="#f4f4f4"/>
<rect x="6" y="1" width="10" height="3" fill="#f4f4f4"/><rect x="5" y="2" width="1" height="2" fill="#f4f4f4"/><rect x="4" y="3" width="1" height="1" fill="#f4f4f4"/>
<rect x="7" y="2" width="7" height="5" fill="#989898"/><rect x="8" y="3" width="2" height="3" fill="#d8d8d8"/>
<rect x="15" y="2" width="1" height="1" fill="#000"/><rect x="16" y="3" width="1" height="1" fill="#000"/>
<rect x="0" y="9" width="21" height="1" fill="#000"/><rect x="20" y="5" width="1" height="5" fill="#000"/>
<rect x="3" y="8" width="3" height="3" fill="#000"/><rect x="15" y="8" width="3" height="3" fill="#000"/>
</svg>
<div style="left:500px;top:580px;width:13px;height:13px;background:#fff;border:1px solid #c8c8c8;box-shadow:inset 1px 1px 0 #404040"></div>
<svg style="left:502px;top:582px" width="10" height="9" viewBox="0 0 10 9"><path d="M1 4 L3.5 7 L9 1" fill="none" stroke="#000" stroke-width="2.2"/></svg>
<div class="wt" style="left:-13px;top:605px;width:60px;text-align:right;font-size:12px;line-height:14px">dB</div>
<div class="wt" style="left:-13px;top:625px;width:60px;text-align:right;font-size:12px;line-height:14px">96</div>
<div class="wt" style="left:-13px;top:645px;width:60px;text-align:right;font-size:12px;line-height:14px">90</div>
<div class="wt" style="left:-13px;top:665px;width:60px;text-align:right;font-size:12px;line-height:14px">84</div>
<div class="wt" style="left:-13px;top:685px;width:60px;text-align:right;font-size:12px;line-height:14px">78</div>
<div class="wt" style="left:-13px;top:705px;width:60px;text-align:right;font-size:12px;line-height:14px">72</div>
<div class="wt" style="left:-13px;top:725px;width:60px;text-align:right;font-size:12px;line-height:14px">66</div>
<div class="wt" style="left:-13px;top:745px;width:60px;text-align:right;font-size:12px;line-height:14px">60</div>
<div class="wt" style="left:-13px;top:765px;width:60px;text-align:right;font-size:12px;line-height:14px">54</div>
<div class="wt" style="left:50px;top:789px;font-size:12px;line-height:14px">5 Hz</div>
<div class="wt" style="left:76.6px;top:789px;width:60px;text-align:center;font-size:12px;line-height:14px">10</div>
<div class="wt" style="left:199.9px;top:789px;width:60px;text-align:center;font-size:12px;line-height:14px">50</div>
<div class="wt" style="left:253.0px;top:789px;width:60px;text-align:center;font-size:12px;line-height:14px">100</div>
<div class="wt" style="left:376.3px;top:789px;width:60px;text-align:center;font-size:12px;line-height:14px">500</div>
<div class="wt" style="left:429.4px;top:789px;width:60px;text-align:center;font-size:12px;line-height:14px">1000</div>
<div class="wt" style="left:456px;top:789px;width:60px;text-align:right;font-size:12px;line-height:14px">2000</div>
<div class="btn" style="left:528px;top:577px;width:38px;height:16px;border:1px solid #000;box-shadow:inset 1px 1px 0 #fff, inset -1px -1px 0 #716f64, inset -2px -2px 0 #aca899;font-size:10.5px;line-height:14px;letter-spacing:0px">Clear</div>
<div class="btn" style="left:569px;top:577px;width:42px;height:15px;box-shadow:inset 1px 1px 0 #fff, inset -1px -1px 0 #716f64, inset -2px -2px 0 #aca899;font-size:10.5px;line-height:14px;letter-spacing:0px">Cursor</div>
<div class="wt" style="left:571px;top:580px;width:400px;text-align:center;font-size:12px;line-height:14px;font-weight:bold;letter-spacing:0px;text-shadow:1px 1px 0 #000">Group Delay (Milliseconds/Hz)</div>
<div class="wt" style="left:488px;top:595px;width:60px;text-align:right;font-size:11.5px;line-height:14px">ms</div>
<div class="wt" style="left:488px;top:615px;width:60px;text-align:right;font-size:11.5px;line-height:14px">16</div>
<div class="wt" style="left:488px;top:635px;width:60px;text-align:right;font-size:11.5px;line-height:14px">14</div>
<div class="wt" style="left:488px;top:655px;width:60px;text-align:right;font-size:11.5px;line-height:14px">12</div>
<div class="wt" style="left:488px;top:675px;width:60px;text-align:right;font-size:11.5px;line-height:14px">10</div>
<div class="wt" style="left:488px;top:695px;width:60px;text-align:right;font-size:11.5px;line-height:14px">8</div>
<div class="wt" style="left:488px;top:715px;width:60px;text-align:right;font-size:11.5px;line-height:14px">6</div>
<div class="wt" style="left:488px;top:735px;width:60px;text-align:right;font-size:11.5px;line-height:14px">4</div>
<div class="wt" style="left:488px;top:755px;width:60px;text-align:right;font-size:11.5px;line-height:14px">2</div>
<div class="wt" style="left:488px;top:775px;width:60px;text-align:right;font-size:11.5px;line-height:14px">0</div>
<div class="wt" style="left:552px;top:789px;font-size:12px;line-height:14px">5 Hz</div>
<div class="wt" style="left:578.6px;top:789px;width:60px;text-align:center;font-size:12px;line-height:14px">10</div>
<div class="wt" style="left:701.9px;top:789px;width:60px;text-align:center;font-size:12px;line-height:14px">50</div>
<div class="wt" style="left:755.0px;top:789px;width:60px;text-align:center;font-size:12px;line-height:14px">100</div>
<div class="wt" style="left:878.3px;top:789px;width:60px;text-align:center;font-size:12px;line-height:14px">500</div>
<div class="wt" style="left:931.4px;top:789px;width:60px;text-align:center;font-size:12px;line-height:14px">1000</div>
<div class="wt" style="left:958px;top:789px;width:60px;text-align:right;font-size:12px;line-height:14px">2000</div>
<svg style="left:0;top:0" width="1044" height="839" viewBox="0 0 1044 839" shape-rendering="crispEdges"><rect x="53" y="362" width="461" height="182" fill="#000"/><rect x="54" y="373" width="459" height="1" fill="#989898"/><rect x="54" y="383" width="459" height="1" fill="#989898"/><rect x="54" y="393" width="459" height="1" fill="#989898"/><rect x="54" y="403" width="459" height="1" fill="#989898"/><rect x="54" y="413" width="459" height="1" fill="#989898"/><rect x="54" y="423" width="459" height="1" fill="#989898"/><rect x="54" y="433" width="459" height="1" fill="#989898"/><rect x="54" y="443" width="459" height="1" fill="#989898"/><rect x="54" y="453" width="459" height="1" fill="#989898"/><rect x="54" y="463" width="459" height="1" fill="#989898"/><rect x="54" y="473" width="459" height="1" fill="#989898"/><rect x="54" y="483" width="459" height="1" fill="#989898"/><rect x="54" y="493" width="459" height="1" fill="#989898"/><rect x="54" y="503" width="459" height="1" fill="#989898"/><rect x="54" y="513" width="459" height="1" fill="#989898"/><rect x="54" y="523" width="459" height="1" fill="#989898"/><rect x="54" y="533" width="459" height="1" fill="#989898"/><rect x="67" y="363" width="1" height="180" fill="#989898"/><rect x="67" y="544" width="1" height="4" fill="#d0d0d0"/><rect x="79" y="363" width="1" height="180" fill="#989898"/><rect x="79" y="544" width="1" height="4" fill="#d0d0d0"/><rect x="89" y="363" width="1" height="180" fill="#989898"/><rect x="89" y="544" width="1" height="4" fill="#d0d0d0"/><rect x="98" y="363" width="1" height="180" fill="#989898"/><rect x="98" y="544" width="1" height="4" fill="#d0d0d0"/><rect x="106" y="363" width="1" height="180" fill="#989898"/><rect x="106" y="544" width="1" height="4" fill="#d0d0d0"/><rect x="159" y="363" width="1" height="180" fill="#989898"/><rect x="159" y="544" width="1" height="4" fill="#d0d0d0"/><rect x="190" y="363" width="1" height="180" fill="#989898"/><rect x="190" y="544" width="1" height="4" fill="#d0d0d0"/><rect x="212" y="363" width="1" height="180" fill="#989898"/><rect x="212" y="544" width="1" height="4" fill="#d0d0d0"/><rect x="229" y="363" width="1" height="180" fill="#989898"/><rect x="229" y="544" width="1" height="4" fill="#d0d0d0"/><rect x="243" y="363" width="1" height="180" fill="#989898"/><rect x="243" y="544" width="1" height="4" fill="#d0d0d0"/><rect x="255" y="363" width="1" height="180" fill="#989898"/><rect x="255" y="544" width="1" height="4" fill="#d0d0d0"/><rect x="265" y="363" width="1" height="180" fill="#989898"/><rect x="265" y="544" width="1" height="4" fill="#d0d0d0"/><rect x="274" y="363" width="1" height="180" fill="#989898"/><rect x="274" y="544" width="1" height="4" fill="#d0d0d0"/><rect x="283" y="363" width="1" height="180" fill="#989898"/><rect x="283" y="544" width="1" height="4" fill="#d0d0d0"/><rect x="336" y="363" width="1" height="180" fill="#989898"/><rect x="336" y="544" width="1" height="4" fill="#d0d0d0"/><rect x="367" y="363" width="1" height="180" fill="#989898"/><rect x="367" y="544" width="1" height="4" fill="#d0d0d0"/><rect x="389" y="363" width="1" height="180" fill="#989898"/><rect x="389" y="544" width="1" height="4" fill="#d0d0d0"/><rect x="406" y="363" width="1" height="180" fill="#989898"/><rect x="406" y="544" width="1" height="4" fill="#d0d0d0"/><rect x="420" y="363" width="1" height="180" fill="#989898"/><rect x="420" y="544" width="1" height="4" fill="#d0d0d0"/><rect x="432" y="363" width="1" height="180" fill="#989898"/><rect x="432" y="544" width="1" height="4" fill="#d0d0d0"/><rect x="442" y="363" width="1" height="180" fill="#989898"/><rect x="442" y="544" width="1" height="4" fill="#d0d0d0"/><rect x="451" y="363" width="1" height="180" fill="#989898"/><rect x="451" y="544" width="1" height="4" fill="#d0d0d0"/><rect x="459" y="363" width="1" height="180" fill="#989898"/><rect x="459" y="544" width="1" height="4" fill="#d0d0d0"/><rect x="53" y="544" width="1" height="4" fill="#d0d0d0"/><rect x="513" y="544" width="1" height="4" fill="#d0d0d0"/><rect x="53" y="362" width="461" height="1" fill="#c8c8c8"/><rect x="53" y="543" width="461" height="1" fill="#c8c8c8"/><rect x="53" y="362" width="1" height="182" fill="#c8c8c8"/><rect x="513" y="362" width="1" height="182" fill="#c8c8c8"/><path d="M54.0 411.5 L189.2 411.5 L189.5 412.6 L219.0 412.6 L220.0 413.5 L222.0 413.3 L222.5 412.4 L233.0 412.4 L233.5 413.3 L512.0 413.3" fill="none" stroke="#e8e850" stroke-width="1.25" stroke-linejoin="round" shape-rendering="auto"/><path d="M53.6 450.6 C55.4 449.3 60.1 445.7 64.4 442.9 C68.7 440.1 73.6 437.3 79.3 433.9 C85.0 430.5 92.0 426.1 98.5 422.5 C105.0 418.9 111.5 415.8 118.2 412.6 C124.9 409.4 131.6 406.2 138.6 403.3 C145.6 400.4 155.0 396.9 160.2 395.4 C165.4 393.9 166.5 394.5 170.0 394.1 C173.5 393.7 178.0 392.8 181.4 392.9 C184.8 393.0 185.3 393.8 190.4 394.9 C195.5 396.0 206.7 398.5 211.9 399.8 C217.1 401.1 218.3 401.9 221.5 402.7 C224.7 403.5 227.3 403.3 231.1 404.5 C234.9 405.7 238.8 408.8 244.2 409.9 C249.6 411.0 256.4 410.9 263.4 411.4 C270.3 411.9 282.1 412.6 285.9 412.8" fill="none" stroke="#c81c2a" stroke-width="1.25" stroke-linejoin="round" shape-rendering="auto"/><rect x="47" y="373" width="6" height="1" fill="#e0e0e0"/><rect x="47" y="393" width="6" height="1" fill="#e0e0e0"/><rect x="47" y="413" width="6" height="1" fill="#e0e0e0"/><rect x="47" y="433" width="6" height="1" fill="#e0e0e0"/><rect x="47" y="453" width="6" height="1" fill="#e0e0e0"/><rect x="47" y="473" width="6" height="1" fill="#e0e0e0"/><rect x="47" y="493" width="6" height="1" fill="#e0e0e0"/><rect x="47" y="513" width="6" height="1" fill="#e0e0e0"/><rect x="47" y="533" width="6" height="1" fill="#e0e0e0"/><rect x="514" y="373" width="4" height="1" fill="#e0e0e0"/><rect x="514" y="393" width="4" height="1" fill="#e0e0e0"/><rect x="514" y="413" width="4" height="1" fill="#e0e0e0"/><rect x="514" y="433" width="4" height="1" fill="#e0e0e0"/><rect x="514" y="453" width="4" height="1" fill="#e0e0e0"/><rect x="514" y="473" width="4" height="1" fill="#e0e0e0"/><rect x="514" y="493" width="4" height="1" fill="#e0e0e0"/><rect x="514" y="513" width="4" height="1" fill="#e0e0e0"/><rect x="514" y="533" width="4" height="1" fill="#e0e0e0"/><rect x="555" y="362" width="461" height="182" fill="#000"/><rect x="556" y="373" width="459" height="1" fill="#989898"/><rect x="556" y="383" width="459" height="1" fill="#989898"/><rect x="556" y="393" width="459" height="1" fill="#989898"/><rect x="556" y="403" width="459" height="1" fill="#989898"/><rect x="556" y="413" width="459" height="1" fill="#989898"/><rect x="556" y="423" width="459" height="1" fill="#989898"/><rect x="556" y="433" width="459" height="1" fill="#989898"/><rect x="556" y="443" width="459" height="1" fill="#989898"/><rect x="556" y="453" width="459" height="1" fill="#989898"/><rect x="556" y="463" width="459" height="1" fill="#989898"/><rect x="556" y="473" width="459" height="1" fill="#989898"/><rect x="556" y="483" width="459" height="1" fill="#989898"/><rect x="556" y="493" width="459" height="1" fill="#989898"/><rect x="556" y="503" width="459" height="1" fill="#989898"/><rect x="556" y="513" width="459" height="1" fill="#989898"/><rect x="556" y="523" width="459" height="1" fill="#989898"/><rect x="556" y="533" width="459" height="1" fill="#989898"/><rect x="569" y="363" width="1" height="180" fill="#989898"/><rect x="569" y="544" width="1" height="4" fill="#d0d0d0"/><rect x="581" y="363" width="1" height="180" fill="#989898"/><rect x="581" y="544" width="1" height="4" fill="#d0d0d0"/><rect x="591" y="363" width="1" height="180" fill="#989898"/><rect x="591" y="544" width="1" height="4" fill="#d0d0d0"/><rect x="600" y="363" width="1" height="180" fill="#989898"/><rect x="600" y="544" width="1" height="4" fill="#d0d0d0"/><rect x="608" y="363" width="1" height="180" fill="#989898"/><rect x="608" y="544" width="1" height="4" fill="#d0d0d0"/><rect x="661" y="363" width="1" height="180" fill="#989898"/><rect x="661" y="544" width="1" height="4" fill="#d0d0d0"/><rect x="692" y="363" width="1" height="180" fill="#989898"/><rect x="692" y="544" width="1" height="4" fill="#d0d0d0"/><rect x="714" y="363" width="1" height="180" fill="#989898"/><rect x="714" y="544" width="1" height="4" fill="#d0d0d0"/><rect x="731" y="363" width="1" height="180" fill="#989898"/><rect x="731" y="544" width="1" height="4" fill="#d0d0d0"/><rect x="745" y="363" width="1" height="180" fill="#989898"/><rect x="745" y="544" width="1" height="4" fill="#d0d0d0"/><rect x="757" y="363" width="1" height="180" fill="#989898"/><rect x="757" y="544" width="1" height="4" fill="#d0d0d0"/><rect x="767" y="363" width="1" height="180" fill="#989898"/><rect x="767" y="544" width="1" height="4" fill="#d0d0d0"/><rect x="776" y="363" width="1" height="180" fill="#989898"/><rect x="776" y="544" width="1" height="4" fill="#d0d0d0"/><rect x="785" y="363" width="1" height="180" fill="#989898"/><rect x="785" y="544" width="1" height="4" fill="#d0d0d0"/><rect x="838" y="363" width="1" height="180" fill="#989898"/><rect x="838" y="544" width="1" height="4" fill="#d0d0d0"/><rect x="869" y="363" width="1" height="180" fill="#989898"/><rect x="869" y="544" width="1" height="4" fill="#d0d0d0"/><rect x="891" y="363" width="1" height="180" fill="#989898"/><rect x="891" y="544" width="1" height="4" fill="#d0d0d0"/><rect x="908" y="363" width="1" height="180" fill="#989898"/><rect x="908" y="544" width="1" height="4" fill="#d0d0d0"/><rect x="922" y="363" width="1" height="180" fill="#989898"/><rect x="922" y="544" width="1" height="4" fill="#d0d0d0"/><rect x="934" y="363" width="1" height="180" fill="#989898"/><rect x="934" y="544" width="1" height="4" fill="#d0d0d0"/><rect x="944" y="363" width="1" height="180" fill="#989898"/><rect x="944" y="544" width="1" height="4" fill="#d0d0d0"/><rect x="953" y="363" width="1" height="180" fill="#989898"/><rect x="953" y="544" width="1" height="4" fill="#d0d0d0"/><rect x="961" y="363" width="1" height="180" fill="#989898"/><rect x="961" y="544" width="1" height="4" fill="#d0d0d0"/><rect x="555" y="544" width="1" height="4" fill="#d0d0d0"/><rect x="1015" y="544" width="1" height="4" fill="#d0d0d0"/><rect x="555" y="362" width="461" height="1" fill="#c8c8c8"/><rect x="555" y="543" width="461" height="1" fill="#c8c8c8"/><rect x="555" y="362" width="1" height="182" fill="#c8c8c8"/><rect x="1015" y="362" width="1" height="182" fill="#c8c8c8"/><path d="M555.8 388.0 C558.0 388.8 564.5 391.4 568.8 392.9 C573.1 394.4 576.7 395.3 581.7 397.2 C586.7 399.1 593.2 401.8 599.0 404.4 C604.8 407.0 610.5 409.9 616.2 413.0 C622.0 416.1 627.8 419.5 633.5 423.1 C639.2 426.7 643.5 429.4 650.7 434.6 C657.9 439.8 668.4 447.6 676.6 454.5 C684.8 461.4 693.0 469.7 700.0 476.0 C707.0 482.3 713.3 488.0 718.8 492.5 C724.3 497.0 727.7 499.8 733.2 503.1 C738.7 506.4 745.3 509.6 751.8 512.4 C758.3 515.1 766.2 517.8 772.0 519.6 C777.8 521.4 780.1 521.8 786.3 523.2 C792.5 524.6 802.1 526.6 809.3 528.2 C816.5 529.8 819.3 531.1 829.4 532.6 C839.5 534.1 858.0 536.0 869.7 537.1 C881.4 538.2 887.0 538.8 899.5 539.4 C912.0 540.0 930.4 540.5 944.4 541.0 C958.4 541.5 971.8 542.1 983.4 542.4 C995.0 542.7 1008.9 542.9 1014.0 543.0" fill="none" stroke="#c81c2a" stroke-width="1.25" stroke-linejoin="round" shape-rendering="auto"/><path d="M555.8 457.3 C560.1 457.6 572.6 458.4 581.7 459.3 C590.8 460.2 600.9 461.7 610.5 463.0 C620.1 464.3 629.6 465.3 639.2 466.9 C648.8 468.5 661.2 471.1 668.0 472.7 C674.8 474.3 676.1 475.3 680.0 476.5 C683.9 477.7 685.8 477.8 691.5 480.1 C697.2 482.4 707.5 486.7 714.5 490.2 C721.5 493.7 726.5 497.5 733.2 501.0 C739.9 504.5 748.2 508.1 754.7 511.0 C761.2 513.9 766.7 516.2 772.0 518.2 C777.3 520.2 780.1 521.2 786.3 522.9 C792.5 524.6 802.1 526.7 809.3 528.2 C816.5 529.7 819.3 530.3 829.4 531.8 C839.5 533.3 858.0 535.8 869.7 537.0 C881.4 538.2 887.0 538.6 899.5 539.3 C912.0 540.0 930.4 540.5 944.4 541.0 C958.4 541.5 971.8 542.0 983.4 542.3 C995.0 542.6 1008.9 542.9 1014.0 543.0" fill="none" stroke="#e8e850" stroke-width="1.25" stroke-linejoin="round" shape-rendering="auto"/><rect x="551" y="363" width="4" height="1" fill="#e0e0e0"/><rect x="551" y="383" width="4" height="1" fill="#e0e0e0"/><rect x="551" y="403" width="4" height="1" fill="#e0e0e0"/><rect x="551" y="423" width="4" height="1" fill="#e0e0e0"/><rect x="551" y="443" width="4" height="1" fill="#e0e0e0"/><rect x="551" y="463" width="4" height="1" fill="#e0e0e0"/><rect x="551" y="483" width="4" height="1" fill="#e0e0e0"/><rect x="551" y="503" width="4" height="1" fill="#e0e0e0"/><rect x="551" y="523" width="4" height="1" fill="#e0e0e0"/><rect x="551" y="543" width="4" height="1" fill="#e0e0e0"/><rect x="1016" y="363" width="4" height="1" fill="#e0e0e0"/><rect x="1016" y="383" width="4" height="1" fill="#e0e0e0"/><rect x="1016" y="403" width="4" height="1" fill="#e0e0e0"/><rect x="1016" y="423" width="4" height="1" fill="#e0e0e0"/><rect x="1016" y="443" width="4" height="1" fill="#e0e0e0"/><rect x="1016" y="463" width="4" height="1" fill="#e0e0e0"/><rect x="1016" y="483" width="4" height="1" fill="#e0e0e0"/><rect x="1016" y="503" width="4" height="1" fill="#e0e0e0"/><rect x="1016" y="523" width="4" height="1" fill="#e0e0e0"/><rect x="1016" y="543" width="4" height="1" fill="#e0e0e0"/><rect x="53" y="601" width="461" height="182" fill="#000"/><rect x="54" y="612" width="459" height="1" fill="#989898"/><rect x="54" y="622" width="459" height="1" fill="#989898"/><rect x="54" y="632" width="459" height="1" fill="#989898"/><rect x="54" y="642" width="459" height="1" fill="#989898"/><rect x="54" y="652" width="459" height="1" fill="#989898"/><rect x="54" y="662" width="459" height="1" fill="#989898"/><rect x="54" y="672" width="459" height="1" fill="#989898"/><rect x="54" y="682" width="459" height="1" fill="#989898"/><rect x="54" y="692" width="459" height="1" fill="#989898"/><rect x="54" y="702" width="459" height="1" fill="#989898"/><rect x="54" y="712" width="459" height="1" fill="#989898"/><rect x="54" y="722" width="459" height="1" fill="#989898"/><rect x="54" y="732" width="459" height="1" fill="#989898"/><rect x="54" y="742" width="459" height="1" fill="#989898"/><rect x="54" y="752" width="459" height="1" fill="#989898"/><rect x="54" y="762" width="459" height="1" fill="#989898"/><rect x="54" y="772" width="459" height="1" fill="#989898"/><rect x="67" y="602" width="1" height="180" fill="#989898"/><rect x="67" y="783" width="1" height="4" fill="#d0d0d0"/><rect x="79" y="602" width="1" height="180" fill="#989898"/><rect x="79" y="783" width="1" height="4" fill="#d0d0d0"/><rect x="89" y="602" width="1" height="180" fill="#989898"/><rect x="89" y="783" width="1" height="4" fill="#d0d0d0"/><rect x="98" y="602" width="1" height="180" fill="#989898"/><rect x="98" y="783" width="1" height="4" fill="#d0d0d0"/><rect x="106" y="602" width="1" height="180" fill="#989898"/><rect x="106" y="783" width="1" height="4" fill="#d0d0d0"/><rect x="159" y="602" width="1" height="180" fill="#989898"/><rect x="159" y="783" width="1" height="4" fill="#d0d0d0"/><rect x="190" y="602" width="1" height="180" fill="#989898"/><rect x="190" y="783" width="1" height="4" fill="#d0d0d0"/><rect x="212" y="602" width="1" height="180" fill="#989898"/><rect x="212" y="783" width="1" height="4" fill="#d0d0d0"/><rect x="229" y="602" width="1" height="180" fill="#989898"/><rect x="229" y="783" width="1" height="4" fill="#d0d0d0"/><rect x="243" y="602" width="1" height="180" fill="#989898"/><rect x="243" y="783" width="1" height="4" fill="#d0d0d0"/><rect x="255" y="602" width="1" height="180" fill="#989898"/><rect x="255" y="783" width="1" height="4" fill="#d0d0d0"/><rect x="265" y="602" width="1" height="180" fill="#989898"/><rect x="265" y="783" width="1" height="4" fill="#d0d0d0"/><rect x="274" y="602" width="1" height="180" fill="#989898"/><rect x="274" y="783" width="1" height="4" fill="#d0d0d0"/><rect x="283" y="602" width="1" height="180" fill="#989898"/><rect x="283" y="783" width="1" height="4" fill="#d0d0d0"/><rect x="336" y="602" width="1" height="180" fill="#989898"/><rect x="336" y="783" width="1" height="4" fill="#d0d0d0"/><rect x="367" y="602" width="1" height="180" fill="#989898"/><rect x="367" y="783" width="1" height="4" fill="#d0d0d0"/><rect x="389" y="602" width="1" height="180" fill="#989898"/><rect x="389" y="783" width="1" height="4" fill="#d0d0d0"/><rect x="406" y="602" width="1" height="180" fill="#989898"/><rect x="406" y="783" width="1" height="4" fill="#d0d0d0"/><rect x="420" y="602" width="1" height="180" fill="#989898"/><rect x="420" y="783" width="1" height="4" fill="#d0d0d0"/><rect x="432" y="602" width="1" height="180" fill="#989898"/><rect x="432" y="783" width="1" height="4" fill="#d0d0d0"/><rect x="442" y="602" width="1" height="180" fill="#989898"/><rect x="442" y="783" width="1" height="4" fill="#d0d0d0"/><rect x="451" y="602" width="1" height="180" fill="#989898"/><rect x="451" y="783" width="1" height="4" fill="#d0d0d0"/><rect x="459" y="602" width="1" height="180" fill="#989898"/><rect x="459" y="783" width="1" height="4" fill="#d0d0d0"/><rect x="53" y="783" width="1" height="4" fill="#d0d0d0"/><rect x="513" y="783" width="1" height="4" fill="#d0d0d0"/><rect x="53" y="601" width="461" height="1" fill="#c8c8c8"/><rect x="53" y="782" width="461" height="1" fill="#c8c8c8"/><rect x="53" y="601" width="1" height="182" fill="#c8c8c8"/><rect x="513" y="601" width="1" height="182" fill="#c8c8c8"/><path d="M54.0 650.5 L189.2 650.5 L189.5 651.6 L219.0 651.6 L220.0 652.5 L222.0 652.3 L222.5 651.4 L233.0 651.4 L233.5 652.3 L512.0 652.3" fill="none" stroke="#e8e850" stroke-width="1.25" stroke-linejoin="round" shape-rendering="auto"/><path d="M53.6 689.6 C55.4 688.3 60.1 684.7 64.4 681.9 C68.7 679.1 73.6 676.3 79.3 672.9 C85.0 669.5 92.0 665.0 98.5 661.5 C105.0 658.0 111.5 654.8 118.2 651.6 C124.9 648.4 131.6 645.2 138.6 642.3 C145.6 639.4 155.0 635.9 160.2 634.4 C165.4 632.9 166.5 633.5 170.0 633.1 C173.5 632.7 178.0 631.8 181.4 631.9 C184.8 632.0 185.3 632.8 190.4 633.9 C195.5 635.0 206.7 637.5 211.9 638.8 C217.1 640.1 218.3 640.9 221.5 641.7 C224.7 642.5 227.3 642.3 231.1 643.5 C234.9 644.7 238.8 647.8 244.2 648.9 C249.6 650.0 256.4 649.9 263.4 650.4 C270.3 650.9 282.1 651.6 285.9 651.8" fill="none" stroke="#c81c2a" stroke-width="1.25" stroke-linejoin="round" shape-rendering="auto"/><rect x="47" y="612" width="6" height="1" fill="#e0e0e0"/><rect x="47" y="632" width="6" height="1" fill="#e0e0e0"/><rect x="47" y="652" width="6" height="1" fill="#e0e0e0"/><rect x="47" y="672" width="6" height="1" fill="#e0e0e0"/><rect x="47" y="692" width="6" height="1" fill="#e0e0e0"/><rect x="47" y="712" width="6" height="1" fill="#e0e0e0"/><rect x="47" y="732" width="6" height="1" fill="#e0e0e0"/><rect x="47" y="752" width="6" height="1" fill="#e0e0e0"/><rect x="47" y="772" width="6" height="1" fill="#e0e0e0"/><rect x="514" y="612" width="4" height="1" fill="#e0e0e0"/><rect x="514" y="632" width="4" height="1" fill="#e0e0e0"/><rect x="514" y="652" width="4" height="1" fill="#e0e0e0"/><rect x="514" y="672" width="4" height="1" fill="#e0e0e0"/><rect x="514" y="692" width="4" height="1" fill="#e0e0e0"/><rect x="514" y="712" width="4" height="1" fill="#e0e0e0"/><rect x="514" y="732" width="4" height="1" fill="#e0e0e0"/><rect x="514" y="752" width="4" height="1" fill="#e0e0e0"/><rect x="514" y="772" width="4" height="1" fill="#e0e0e0"/><rect x="555" y="601" width="461" height="182" fill="#000"/><rect x="556" y="612" width="459" height="1" fill="#989898"/><rect x="556" y="622" width="459" height="1" fill="#989898"/><rect x="556" y="632" width="459" height="1" fill="#989898"/><rect x="556" y="642" width="459" height="1" fill="#989898"/><rect x="556" y="652" width="459" height="1" fill="#989898"/><rect x="556" y="662" width="459" height="1" fill="#989898"/><rect x="556" y="672" width="459" height="1" fill="#989898"/><rect x="556" y="682" width="459" height="1" fill="#989898"/><rect x="556" y="692" width="459" height="1" fill="#989898"/><rect x="556" y="702" width="459" height="1" fill="#989898"/><rect x="556" y="712" width="459" height="1" fill="#989898"/><rect x="556" y="722" width="459" height="1" fill="#989898"/><rect x="556" y="732" width="459" height="1" fill="#989898"/><rect x="556" y="742" width="459" height="1" fill="#989898"/><rect x="556" y="752" width="459" height="1" fill="#989898"/><rect x="556" y="762" width="459" height="1" fill="#989898"/><rect x="556" y="772" width="459" height="1" fill="#989898"/><rect x="569" y="602" width="1" height="180" fill="#989898"/><rect x="569" y="783" width="1" height="4" fill="#d0d0d0"/><rect x="581" y="602" width="1" height="180" fill="#989898"/><rect x="581" y="783" width="1" height="4" fill="#d0d0d0"/><rect x="591" y="602" width="1" height="180" fill="#989898"/><rect x="591" y="783" width="1" height="4" fill="#d0d0d0"/><rect x="600" y="602" width="1" height="180" fill="#989898"/><rect x="600" y="783" width="1" height="4" fill="#d0d0d0"/><rect x="608" y="602" width="1" height="180" fill="#989898"/><rect x="608" y="783" width="1" height="4" fill="#d0d0d0"/><rect x="661" y="602" width="1" height="180" fill="#989898"/><rect x="661" y="783" width="1" height="4" fill="#d0d0d0"/><rect x="692" y="602" width="1" height="180" fill="#989898"/><rect x="692" y="783" width="1" height="4" fill="#d0d0d0"/><rect x="714" y="602" width="1" height="180" fill="#989898"/><rect x="714" y="783" width="1" height="4" fill="#d0d0d0"/><rect x="731" y="602" width="1" height="180" fill="#989898"/><rect x="731" y="783" width="1" height="4" fill="#d0d0d0"/><rect x="745" y="602" width="1" height="180" fill="#989898"/><rect x="745" y="783" width="1" height="4" fill="#d0d0d0"/><rect x="757" y="602" width="1" height="180" fill="#989898"/><rect x="757" y="783" width="1" height="4" fill="#d0d0d0"/><rect x="767" y="602" width="1" height="180" fill="#989898"/><rect x="767" y="783" width="1" height="4" fill="#d0d0d0"/><rect x="776" y="602" width="1" height="180" fill="#989898"/><rect x="776" y="783" width="1" height="4" fill="#d0d0d0"/><rect x="785" y="602" width="1" height="180" fill="#989898"/><rect x="785" y="783" width="1" height="4" fill="#d0d0d0"/><rect x="838" y="602" width="1" height="180" fill="#989898"/><rect x="838" y="783" width="1" height="4" fill="#d0d0d0"/><rect x="869" y="602" width="1" height="180" fill="#989898"/><rect x="869" y="783" width="1" height="4" fill="#d0d0d0"/><rect x="891" y="602" width="1" height="180" fill="#989898"/><rect x="891" y="783" width="1" height="4" fill="#d0d0d0"/><rect x="908" y="602" width="1" height="180" fill="#989898"/><rect x="908" y="783" width="1" height="4" fill="#d0d0d0"/><rect x="922" y="602" width="1" height="180" fill="#989898"/><rect x="922" y="783" width="1" height="4" fill="#d0d0d0"/><rect x="934" y="602" width="1" height="180" fill="#989898"/><rect x="934" y="783" width="1" height="4" fill="#d0d0d0"/><rect x="944" y="602" width="1" height="180" fill="#989898"/><rect x="944" y="783" width="1" height="4" fill="#d0d0d0"/><rect x="953" y="602" width="1" height="180" fill="#989898"/><rect x="953" y="783" width="1" height="4" fill="#d0d0d0"/><rect x="961" y="602" width="1" height="180" fill="#989898"/><rect x="961" y="783" width="1" height="4" fill="#d0d0d0"/><rect x="555" y="783" width="1" height="4" fill="#d0d0d0"/><rect x="1015" y="783" width="1" height="4" fill="#d0d0d0"/><rect x="555" y="601" width="461" height="1" fill="#c8c8c8"/><rect x="555" y="782" width="461" height="1" fill="#c8c8c8"/><rect x="555" y="601" width="1" height="182" fill="#c8c8c8"/><rect x="1015" y="601" width="1" height="182" fill="#c8c8c8"/><path d="M648.5 602.3 C650.6 603.8 657.2 608.3 661.3 611.4 C665.3 614.5 669.7 618.6 672.8 621.1 C675.9 623.6 678.3 624.7 680.1 626.6 C681.9 628.5 682.0 630.1 683.8 632.7 C685.6 635.3 689.5 639.7 691.1 642.4 C692.7 645.1 692.1 646.2 693.5 649.1 C694.9 652.0 697.8 656.4 699.6 660.0 C701.4 663.6 702.6 667.1 704.4 671.0 C706.2 674.9 708.6 678.1 710.5 683.1 C712.4 688.1 713.3 695.3 715.5 700.7 C717.7 706.1 720.6 710.4 723.5 715.5 C726.4 720.6 729.1 726.2 732.9 731.6 C736.7 737.0 742.0 743.5 746.3 747.7 C750.5 752.0 754.8 754.5 758.4 757.1 C762.0 759.7 763.5 760.9 767.8 763.1 C772.0 765.3 777.9 768.5 783.9 770.5 C789.9 772.5 797.3 773.9 804.0 775.2 C810.7 776.5 818.5 777.8 824.1 778.5 C829.7 779.2 830.7 779.2 837.5 779.6 C844.3 780.0 853.7 780.7 865.0 781.0 C876.3 781.3 898.6 781.3 905.3 781.4" fill="none" stroke="#c81c2a" stroke-width="1.25" stroke-linejoin="round" shape-rendering="auto"/><path d="M555.8 735.1 C558.8 735.0 565.4 734.7 574.0 734.4 C582.6 734.1 596.3 734.0 607.5 733.4 C618.7 732.8 631.8 731.8 641.0 731.0 C650.2 730.2 655.3 729.4 662.5 728.6 C669.7 727.8 676.4 726.6 684.1 726.2 C691.8 725.9 703.8 726.2 708.8 726.5 C713.8 726.8 712.3 727.2 714.1 727.8 C715.9 728.4 718.0 729.8 719.5 730.2 C721.0 730.7 720.4 729.1 722.9 730.5 C725.4 731.9 730.4 735.5 734.3 738.3 C738.2 741.0 742.1 743.9 746.3 747.0 C750.5 750.1 755.9 754.5 759.7 757.1 C763.5 759.7 764.9 760.3 769.1 762.4 C773.4 764.5 779.4 767.8 785.2 769.8 C791.0 771.8 797.5 773.2 804.0 774.5 C810.5 775.8 818.5 777.0 824.1 777.8 C829.7 778.6 830.7 778.7 837.5 779.2 C844.3 779.7 853.7 780.6 865.0 781.0 C876.3 781.4 898.6 781.3 905.3 781.4" fill="none" stroke="#e8e850" stroke-width="1.25" stroke-linejoin="round" shape-rendering="auto"/><path d="M905.3 781.4 L906.0 782.3 L1014.0 782.3" fill="none" stroke="#e8e850" stroke-width="1.25" stroke-linejoin="round" shape-rendering="auto"/><rect x="551" y="602" width="4" height="1" fill="#e0e0e0"/><rect x="551" y="622" width="4" height="1" fill="#e0e0e0"/><rect x="551" y="642" width="4" height="1" fill="#e0e0e0"/><rect x="551" y="662" width="4" height="1" fill="#e0e0e0"/><rect x="551" y="682" width="4" height="1" fill="#e0e0e0"/><rect x="551" y="702" width="4" height="1" fill="#e0e0e0"/><rect x="551" y="722" width="4" height="1" fill="#e0e0e0"/><rect x="551" y="742" width="4" height="1" fill="#e0e0e0"/><rect x="551" y="762" width="4" height="1" fill="#e0e0e0"/><rect x="551" y="782" width="4" height="1" fill="#e0e0e0"/><rect x="1016" y="602" width="4" height="1" fill="#e0e0e0"/><rect x="1016" y="622" width="4" height="1" fill="#e0e0e0"/><rect x="1016" y="642" width="4" height="1" fill="#e0e0e0"/><rect x="1016" y="662" width="4" height="1" fill="#e0e0e0"/><rect x="1016" y="682" width="4" height="1" fill="#e0e0e0"/><rect x="1016" y="702" width="4" height="1" fill="#e0e0e0"/><rect x="1016" y="722" width="4" height="1" fill="#e0e0e0"/><rect x="1016" y="742" width="4" height="1" fill="#e0e0e0"/><rect x="1016" y="762" width="4" height="1" fill="#e0e0e0"/><rect x="1016" y="782" width="4" height="1" fill="#e0e0e0"/></svg>
</body></html>
